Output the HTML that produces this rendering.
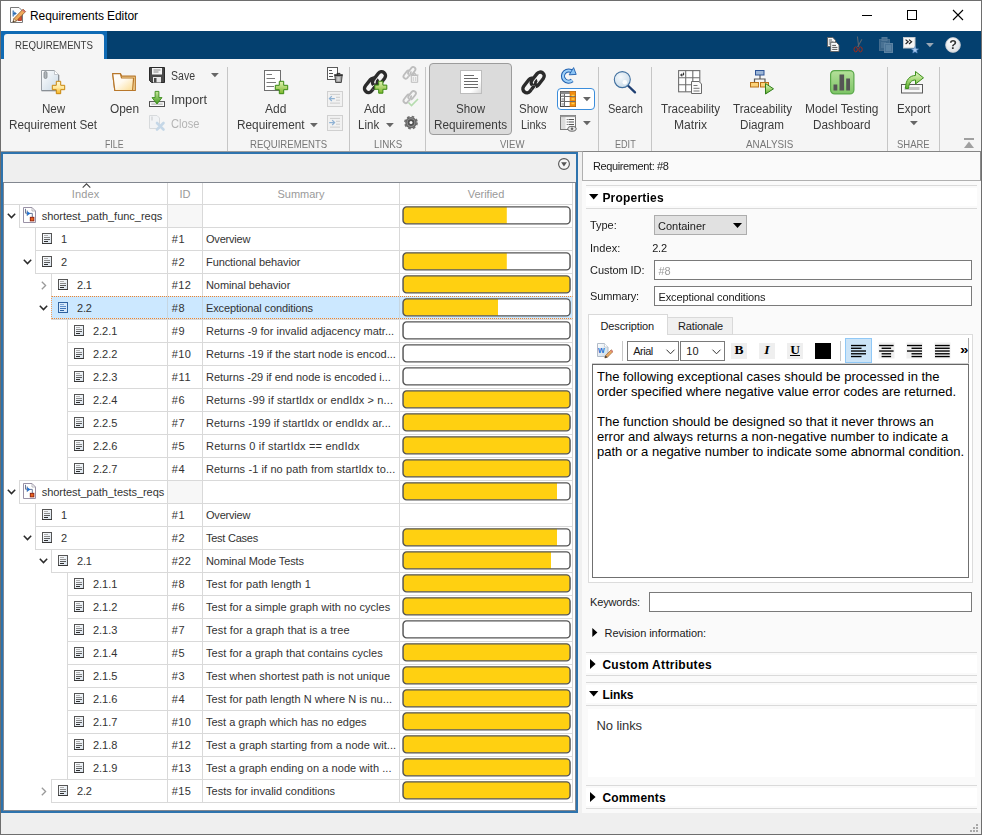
<!DOCTYPE html>
<html lang="en"><head><meta charset="utf-8"><title>Requirements Editor</title>
<style>
html,body{margin:0;padding:0;}
body{width:982px;height:835px;overflow:hidden;background:#f0f0f0;font-family:"Liberation Sans",sans-serif;}
#w{position:relative;width:982px;height:835px;overflow:hidden;background:#f0f0f0;}
#w div,#w span.t,#w svg{position:absolute;box-sizing:border-box;}
#w span.t{white-space:pre;line-height:16px;height:16px;}
#w svg{overflow:visible;}
</style></head>
<body><div id="w">
<svg width="0" height="0" style="left:0;top:0"><defs>
<linearGradient id="gDoc" x1="0" y1="0" x2="1" y2="1"><stop offset="0" stop-color="#ffffff"/><stop offset="1" stop-color="#c9d9e6"/></linearGradient>
<linearGradient id="gDocW" x1="0" y1="0" x2="1" y2="1"><stop offset="0" stop-color="#ffffff"/><stop offset="0.7" stop-color="#ffffff"/><stop offset="1" stop-color="#d8d8d8"/></linearGradient>
<linearGradient id="gGold" x1="0" y1="0" x2="0" y2="1"><stop offset="0" stop-color="#fff8d0"/><stop offset="0.5" stop-color="#ffe9a0"/><stop offset="1" stop-color="#f5b21c"/></linearGradient>
<linearGradient id="gGreen" x1="0" y1="0" x2="0" y2="1"><stop offset="0" stop-color="#e4f3b4"/><stop offset="1" stop-color="#7ab62a"/></linearGradient>
<linearGradient id="gFold" x1="0" y1="0" x2="1" y2="1"><stop offset="0" stop-color="#ffffff"/><stop offset="0.45" stop-color="#fffaf0"/><stop offset="1" stop-color="#fbdc90"/></linearGradient>
<linearGradient id="gArrG" x1="0" y1="0" x2="0" y2="1"><stop offset="0" stop-color="#c8e89a"/><stop offset="1" stop-color="#3f9a1d"/></linearGradient>
<linearGradient id="gArrL" x1="0" y1="0" x2="0" y2="1"><stop offset="0" stop-color="#e6f6c8"/><stop offset="0.5" stop-color="#a6d878"/><stop offset="1" stop-color="#58a82c"/></linearGradient>
<linearGradient id="gDash" x1="0" y1="0" x2="0" y2="1"><stop offset="0" stop-color="#b5e09a"/><stop offset="1" stop-color="#7cc465"/></linearGradient>
<linearGradient id="gBlue" x1="0" y1="0" x2="0" y2="1"><stop offset="0" stop-color="#bfe0fb"/><stop offset="1" stop-color="#2f7fd0"/></linearGradient>
<linearGradient id="gReq" x1="0" y1="0" x2="1" y2="1"><stop offset="0" stop-color="#ffffff"/><stop offset="1" stop-color="#d8e2ec"/></linearGradient>
<radialGradient id="gLens" cx="0.4" cy="0.35" r="0.7"><stop offset="0" stop-color="#f4f8fb"/><stop offset="1" stop-color="#c9dbe9"/></radialGradient>
<radialGradient id="gHelp" cx="0.4" cy="0.3" r="0.8"><stop offset="0" stop-color="#ffffff"/><stop offset="1" stop-color="#d9dde2"/></radialGradient>
</defs></svg>
<div style="left:0px;top:0px;width:982px;height:31px;background:#fff;"></div>
<svg style="left:10px;top:7px" width="17" height="17" viewBox="0 0 17 17"><path d="M0.5 0.5H9L12.5 4V15.5H0.5Z" fill="#fdfdfd" stroke="#7a7a7a"/><path d="M3.2 3.5V9.5M3.2 6.5H6" stroke="#2f6fb5" stroke-width="1.2" fill="none"/><path d="M4.2 4.6L6.8 6.5L4.2 8.4Z" fill="#2f6fb5"/><rect x="8" y="9" width="3.6" height="4.6" fill="#d9482b" stroke="#9c2a14" stroke-width="0.7"/><path d="M3 15L4 11.5L13 2.2L15.6 4.6L6.4 14Z" fill="#f0a95a" stroke="#8a5a2a" stroke-width="0.8" stroke-linejoin="round"/><path d="M13 2.2L15.6 4.6L14.6 5.6L12 3.2Z" fill="#d46a6a"/><path d="M3 15L4 11.5L6.4 14Z" fill="#f4e3c8" stroke="#6a4a2a" stroke-width="0.5"/><path d="M3 15L3.5 13.6L4.4 14.5Z" fill="#222"/></svg>
<span class="t" style="left:30.00px;top:7.50px;font-size:12px;color:#000;letter-spacing:-0.073px;">Requirements Editor</span>
<svg style="left:862px;top:10px" width="11" height="11" viewBox="0 0 11 11"><path d="M0 5.5H10" stroke="#000" stroke-width="1"/></svg>
<svg style="left:907px;top:10px" width="11" height="11" viewBox="0 0 11 11"><rect x="0.5" y="0.5" width="9" height="9" fill="none" stroke="#000" stroke-width="1"/></svg>
<svg style="left:953px;top:10px" width="11" height="11" viewBox="0 0 11 11"><path d="M0 0L10 10M10 0L0 10" stroke="#000" stroke-width="1.1"/></svg>
<div style="left:0;top:0;width:982px;height:152px;will-change:transform;">
<div style="left:1px;top:31px;width:980px;height:28px;background:#04406f;"></div>
<div style="left:1px;top:31px;width:106px;height:28px;background:#0f6ab4;"></div>
<div style="left:4px;top:34px;width:100px;height:25px;background:#f5f5f5;border-radius:3px 3px 0 0;"></div>
<span class="t" style="left:15.30px;top:37.00px;font-size:10.8px;color:#3a3a3a;transform:scaleX(0.8965);transform-origin:0 50%;">REQUIREMENTS</span>
<svg style="left:827px;top:37px" width="13" height="15" viewBox="0 0 13 15"><path d="M0.5 0.5H5.8L8.5 3.2V9.5H0.5Z" fill="#f6f6f6" stroke="#5e5e5e" stroke-width="0.9"/><path d="M1.8 3H5M1.8 5H6.5M1.8 7H3.5" stroke="#555" stroke-width="0.9"/><path d="M3.7 5.3H9.3L12 8V14.5H3.7Z" fill="#fcfcfc" stroke="#5e5e5e" stroke-width="0.9"/><path d="M5.2 8.4H9M5.2 10.4H10.4M5.2 12.4H10.4" stroke="#444" stroke-width="0.9"/></svg>
<svg style="left:853px;top:36px" width="11" height="17" viewBox="0 0 11 17"><path d="M4.4 0.5L5.7 10.8M8.9 3.2L4.6 11" fill="none" stroke="#5a636e" stroke-width="1.1"/><ellipse cx="2.7" cy="13.4" rx="1.7" ry="2.5" fill="none" stroke="#a32a18" stroke-width="1.0"/><ellipse cx="7.5" cy="13.4" rx="1.7" ry="2.5" fill="none" stroke="#a32a18" stroke-width="1.0"/></svg>
<svg style="left:879px;top:37px" width="14" height="16" viewBox="0 0 14 16"><g opacity="0.5"><rect x="0.5" y="2.5" width="10" height="11" fill="#6f88a2" stroke="#8499ae"/><rect x="3" y="0.5" width="5" height="3" fill="#8aa0b6" stroke="#9fb2c4"/><path d="M2 6H7M2 8H5M2 10H5" stroke="#b9c8d6" stroke-width="0.9"/><rect x="5.5" y="6.5" width="8" height="9" fill="#8da6c0" stroke="#b4c6d8"/><path d="M7 9H12M7 11H12M7 13H12" stroke="#dbe6f0" stroke-width="0.9"/></g></svg>
<svg style="left:903px;top:37px" width="17" height="17" viewBox="0 0 17 17"><rect x="0.5" y="0.5" width="11.5" height="10.5" fill="#f6f6f6" stroke="#c4c9ce"/><path d="M2.6 2.6L5.2 4.8L2.6 7M6 2.6L8.6 4.8L6 7" fill="none" stroke="#222" stroke-width="1.2"/><path d="M11.8 8.8L12.9 11.4L15.8 11.6L13.6 13.4L14.3 16.2L11.8 14.7L9.3 16.2L10 13.4L7.8 11.6L10.7 11.4Z" fill="#a8caf2" stroke="#5a8cc8" stroke-width="0.7" transform="translate(1.6,1.8) scale(0.88)"/></svg>
<svg style="left:925.5px;top:43.3px" width="7.8" height="4.3" viewBox="0 0 7.8 4.3"><path d="M0 0H7.8L3.9 4.3Z" fill="#9aa7b4"/></svg>
<svg style="left:945px;top:36.5px" width="16" height="16" viewBox="0 0 16 16"><circle cx="8" cy="8" r="7.4" fill="url(#gHelp)" stroke="#c5cad0" stroke-width="0.8"/><text x="8" y="12.4" text-anchor="middle" font-family="Liberation Sans, sans-serif" font-weight="bold" font-size="12.5" fill="#333">?</text></svg>
<div style="left:1px;top:59px;width:980px;height:92px;background:#f5f5f5;"></div>
<div style="left:1px;top:151px;width:980px;height:1px;background:#9a9a9a;"></div>
<div style="left:227px;top:67px;width:1px;height:84px;background:#c6c6c6;"></div>
<div style="left:349px;top:67px;width:1px;height:84px;background:#c6c6c6;"></div>
<div style="left:425px;top:67px;width:1px;height:84px;background:#c6c6c6;"></div>
<div style="left:598px;top:67px;width:1px;height:84px;background:#c6c6c6;"></div>
<div style="left:651px;top:67px;width:1px;height:84px;background:#c6c6c6;"></div>
<div style="left:887px;top:67px;width:1px;height:84px;background:#c6c6c6;"></div>
<div style="left:939px;top:67px;width:1px;height:84px;background:#c6c6c6;"></div>
<svg style="left:41px;top:70px" width="25" height="25" viewBox="0 0 25 25"><path d="M0.5 0.5H13.5L17.5 4.5V20.5H0.5Z" fill="url(#gDoc)" stroke="#9aa0a6"/><path d="M13.5 0.5V4.5H17.5" fill="#fff" stroke="#b5bac0" stroke-width="0.8"/><rect x="3" y="1.5" width="3" height="7" rx="1.5" fill="#b0b5ba" stroke="#7f858a" stroke-width="0.8"/><path d="M0.5 20.9H17.9V5" fill="none" stroke="#70757a" stroke-width="0.9" opacity="0.7"/><path d="M15.3 11.3H19.7V15.3H23.7V19.7H19.7V23.7H15.3V19.7H11.3V15.3H15.3Z" fill="url(#gGold)" stroke="#c8860d" stroke-width="1" stroke-linejoin="round"/></svg>
<span class="t" style="left:41.60px;top:101.00px;font-size:12px;color:#3c3c3c;transform:scaleX(0.9664);transform-origin:0 50%;">New</span>
<span class="t" style="left:9.00px;top:117.00px;font-size:12px;color:#3c3c3c;transform:scaleX(0.9773);transform-origin:0 50%;">Requirement Set</span>
<svg style="left:112px;top:72.5px" width="25" height="19" viewBox="0 0 25 19"><path d="M0.7 0.7H8.5L9.8 3.2H23.3V17.5H2.8Z" fill="#fbe3a8" stroke="#b8772a" stroke-width="1.2" stroke-linejoin="round"/><path d="M0.7 0.7H8.3L9.6 5.0H21.6L20.6 17.5H2.8Z" fill="url(#gFold)" stroke="#b8772a" stroke-width="1.2" stroke-linejoin="round"/></svg>
<span class="t" style="left:109.50px;top:101.00px;font-size:12px;color:#3c3c3c;transform:scaleX(0.9879);transform-origin:0 50%;">Open</span>
<svg style="left:149px;top:67px" width="16" height="16" viewBox="0 0 16 16"><path d="M0.5 0.5H15.5V15.5H2.5L0.5 13.5Z" fill="#4a4a4a" stroke="#2a2a2a"/><rect x="3" y="1" width="10" height="6.5" fill="#f4f4f4"/><path d="M4.5 3H11.5M4.5 5H9.5" stroke="#8a8a8a" stroke-width="1"/><rect x="4" y="10" width="8" height="5.5" fill="#e8e8e8"/><rect x="5" y="11" width="2.5" height="4.5" fill="#4a4a4a"/></svg>
<span class="t" style="left:171.00px;top:68.00px;font-size:12px;color:#3c3c3c;transform:scaleX(0.8775);transform-origin:0 50%;">Save</span>
<svg style="left:211.0px;top:73.3px" width="7.8" height="4.3" viewBox="0 0 7.8 4.3"><path d="M0 0H7.8L3.9 4.3Z" fill="#666"/></svg>
<svg style="left:149px;top:91px" width="16" height="16" viewBox="0 0 16 16"><rect x="0.5" y="10.6" width="15" height="4.9" fill="#fbfbfb" stroke="#4f4f4f"/><rect x="2.3" y="12.4" width="11.4" height="1.5" fill="#c2c2c2"/><path d="M6.1 0.4H9.9V6.6H13L8 13L3 6.6H6.1Z" fill="url(#gArrG)" stroke="#3a8a1a" stroke-width="0.9" stroke-linejoin="round"/></svg>
<span class="t" style="left:171.00px;top:92.00px;font-size:12px;color:#3c3c3c;transform:scaleX(1.0586);transform-origin:0 50%;">Import</span>
<svg style="left:149px;top:115px" width="16" height="16" viewBox="0 0 16 16"><g opacity="0.55"><path d="M0.5 0.5H8L10.5 3V13.5H0.5Z" fill="#eef2f6" stroke="#c0c4c8"/><rect x="2" y="1.5" width="2" height="4" fill="#c8ccd0"/><path d="M8 8L14.5 14.5M14.5 8L8 14.5" stroke="#9fc0dc" stroke-width="2.6" stroke-linecap="round"/></g></svg>
<span class="t" style="left:171.00px;top:116.00px;font-size:12px;color:#b4b4b4;transform:scaleX(0.9289);transform-origin:0 50%;">Close</span>
<span class="t" style="left:105.00px;top:136.00px;font-size:10.5px;color:#777;transform:scaleX(0.8343);transform-origin:0 50%;">FILE</span>
<svg style="left:264px;top:70px" width="25" height="25" viewBox="0 0 25 25"><rect x="0.5" y="0.5" width="16" height="20" fill="url(#gDocW)" stroke="#6e6e6e"/><path d="M2.5 4.5H8M2.5 8.5H11M2.5 12.5H12M2.5 16.5H10" stroke="#7a7a7a" stroke-width="1"/><path d="M15.3 11.3H19.7V15.3H23.7V19.7H19.7V23.7H15.3V19.7H11.3V15.3H15.3Z" fill="url(#gGreen)" stroke="#3a8a12" stroke-width="1" stroke-linejoin="round"/></svg>
<span class="t" style="left:265.00px;top:101.00px;font-size:12px;color:#3c3c3c;transform:scaleX(1.0023);transform-origin:0 50%;">Add</span>
<span class="t" style="left:236.60px;top:117.00px;font-size:12px;color:#3c3c3c;transform:scaleX(0.9840);transform-origin:0 50%;">Requirement</span>
<svg style="left:310.0px;top:123.3px" width="7.8" height="4.3" viewBox="0 0 7.8 4.3"><path d="M0 0H7.8L3.9 4.3Z" fill="#666"/></svg>
<svg style="left:327px;top:67px" width="16" height="16" viewBox="0 0 16 16"><rect x="0.5" y="0.5" width="10" height="12" fill="#fff" stroke="#5a5a5a"/><path d="M2 3.5H5M2 6.5H6M2 9.5H6" stroke="#555" stroke-width="1"/><path d="M7.8 8.5H15.2L14.3 15.5H8.7Z" fill="#9a9a9a" stroke="#3c3c3c" stroke-width="0.9"/><path d="M7.2 8H15.8" stroke="#2c2c2c" stroke-width="1.6"/><path d="M10 7V6.4H13V7" fill="none" stroke="#2c2c2c" stroke-width="1"/><path d="M10.3 10V14.2M11.5 10V14.2M12.7 10V14.2" stroke="#e0e0e0" stroke-width="0.7"/></svg>
<svg style="left:327px;top:91px" width="16" height="16" viewBox="0 0 16 16"><rect x="0.5" y="0.5" width="15" height="15" fill="#f1f1f1" stroke="#d0d0d0"/><path d="M3 3.4H13M9 6.3H13M9 9.2H13M3 12.1H13" stroke="#cdcdcd" stroke-width="1"/><path d="M7.8 7.6H2.6M4.8 5.2L2.4 7.6L4.8 10" fill="none" stroke="#8fb2d4" stroke-width="1.2"/></svg>
<svg style="left:327px;top:115px" width="16" height="16" viewBox="0 0 16 16"><rect x="0.5" y="0.5" width="15" height="15" fill="#f1f1f1" stroke="#d0d0d0"/><path d="M3 3.4H13M9 6.3H13M9 9.2H13M3 12.1H13" stroke="#cdcdcd" stroke-width="1"/><path d="M2.2 7.6H7.4M5.2 5.2L7.6 7.6L5.2 10" fill="none" stroke="#8fb2d4" stroke-width="1.2"/></svg>
<span class="t" style="left:249.80px;top:136.00px;font-size:10.5px;color:#777;transform:scaleX(0.9126);transform-origin:0 50%;">REQUIREMENTS</span>
<svg style="left:363px;top:70px" width="25" height="25" viewBox="0 0 25 25"><g fill="none" stroke="#2b2b2b" stroke-width="3.4" opacity="1"><rect x="-8.1" y="-4.0" width="16.2" height="8.0" rx="4.0" transform="translate(8.0,15.3) rotate(-52)" /><g clip-path="circle(4.2px at 10.5px 11.950000000000001px)"><rect x="-8.1" y="-4.0" width="16.2" height="8.0" rx="4.0" transform="translate(16.0,9.0) rotate(-52)" stroke="#f5f5f5" stroke-width="5.2"/></g><rect x="-8.1" y="-4.0" width="16.2" height="8.0" rx="4.0" transform="translate(16.0,9.0) rotate(-52)" /><g clip-path="circle(2.6px at 15.2px 14.55px)"><rect x="-8.1" y="-4.0" width="16.2" height="8.0" rx="4.0" transform="translate(8.0,15.3) rotate(-52)" stroke="#f5f5f5" stroke-width="5.2"/><rect x="-8.1" y="-4.0" width="16.2" height="8.0" rx="4.0" transform="translate(8.0,15.3) rotate(-52)" /></g></g><path d="M15.700000000000001 11.2H19.900000000000002V15.1H23.8V19.3H19.900000000000002V23.2H15.700000000000001V19.3H11.8V15.1H15.700000000000001Z" fill="url(#gGreen)" stroke="#3a8a12" stroke-width="1" stroke-linejoin="round"/></svg>
<span class="t" style="left:363.90px;top:101.00px;font-size:12px;color:#3c3c3c;transform:scaleX(1.0023);transform-origin:0 50%;">Add</span>
<span class="t" style="left:358.20px;top:117.00px;font-size:12px;color:#3c3c3c;transform:scaleX(0.9630);transform-origin:0 50%;">Link</span>
<svg style="left:385.5px;top:123.3px" width="7.8" height="4.3" viewBox="0 0 7.8 4.3"><path d="M0 0H7.8L3.9 4.3Z" fill="#666"/></svg>
<svg style="left:403px;top:67px" width="16" height="16" viewBox="0 0 16 16"><g transform="scale(0.56) translate(-1,-2)"><g fill="none" stroke="#bdbdbd" stroke-width="3.2" opacity="1"><rect x="-8.1" y="-4.0" width="16.2" height="8.0" rx="4.0" transform="translate(8.4,15.5) rotate(-52)" /><g clip-path="circle(4.2px at 11.05px 12.200000000000001px)"><rect x="-8.1" y="-4.0" width="16.2" height="8.0" rx="4.0" transform="translate(16.7,9.3) rotate(-52)" stroke="#f5f5f5" stroke-width="5.0"/></g><rect x="-8.1" y="-4.0" width="16.2" height="8.0" rx="4.0" transform="translate(16.7,9.3) rotate(-52)" /><g clip-path="circle(2.6px at 15.75px 14.8px)"><rect x="-8.1" y="-4.0" width="16.2" height="8.0" rx="4.0" transform="translate(8.4,15.5) rotate(-52)" stroke="#f5f5f5" stroke-width="5.0"/><rect x="-8.1" y="-4.0" width="16.2" height="8.0" rx="4.0" transform="translate(8.4,15.5) rotate(-52)" /></g></g></g><path d="M8.3 8.5H14.7V15.3H8.3Z" fill="#f2f2f2" stroke="#bdbdbd" stroke-width="1"/><path d="M7.5 8H15.5M10 7.6L11.5 6L13 7.6" fill="none" stroke="#bdbdbd" stroke-width="1.2"/><path d="M10.3 10V14M12.7 10V14" stroke="#c8c8c8" stroke-width="0.9"/></svg>
<svg style="left:403px;top:91px" width="16" height="16" viewBox="0 0 16 16"><g transform="scale(0.58) translate(-1,-2)"><g fill="none" stroke="#bdbdbd" stroke-width="3.2" opacity="1"><rect x="-8.1" y="-4.0" width="16.2" height="8.0" rx="4.0" transform="translate(8.4,15.5) rotate(-52)" /><g clip-path="circle(4.2px at 11.05px 12.200000000000001px)"><rect x="-8.1" y="-4.0" width="16.2" height="8.0" rx="4.0" transform="translate(16.7,9.3) rotate(-52)" stroke="#f5f5f5" stroke-width="5.0"/></g><rect x="-8.1" y="-4.0" width="16.2" height="8.0" rx="4.0" transform="translate(16.7,9.3) rotate(-52)" /><g clip-path="circle(2.6px at 15.75px 14.8px)"><rect x="-8.1" y="-4.0" width="16.2" height="8.0" rx="4.0" transform="translate(8.4,15.5) rotate(-52)" stroke="#f5f5f5" stroke-width="5.0"/><rect x="-8.1" y="-4.0" width="16.2" height="8.0" rx="4.0" transform="translate(8.4,15.5) rotate(-52)" /></g></g></g><path d="M5.5 11.5L8.5 14.5L15 8" fill="none" stroke="#b5dcae" stroke-width="1.6"/></svg>
<svg style="left:403px;top:115px" width="16" height="16" viewBox="0 0 16 16"><g transform="translate(0,-0.4)"><circle cx="8" cy="8" r="6.1" fill="none" stroke="#707070" stroke-width="1.6" stroke-dasharray="2.6 2.19"/><circle cx="8" cy="8" r="5.7" fill="#666"/><circle cx="8" cy="8" r="4.3" fill="#909090"/><circle cx="8" cy="8" r="3.3" fill="#505050"/><circle cx="8" cy="8" r="1.5" fill="#fafafa"/></g></svg>
<span class="t" style="left:373.50px;top:136.00px;font-size:10.5px;color:#777;transform:scaleX(0.9293);transform-origin:0 50%;">LINKS</span>
<div style="left:429px;top:63px;width:83px;height:72px;background:#dbdbdb;border:1px solid #9c9c9c;border-radius:4px;"></div>
<svg style="left:460px;top:70px" width="23" height="25" viewBox="0 0 23 25"><rect x="0.5" y="0.5" width="21" height="23" fill="url(#gDocW)" stroke="#bdbdbd"/><path d="M4 5.5H14M4 8.5H18M4 11.5H18M4 14.5H18M4 17.5H18" stroke="#6a6a6a" stroke-width="1"/></svg>
<span class="t" style="left:456.20px;top:101.00px;font-size:12px;color:#3c3c3c;transform:scaleX(0.9661);transform-origin:0 50%;">Show</span>
<span class="t" style="left:434.00px;top:117.00px;font-size:12px;color:#3c3c3c;transform:scaleX(0.9772);transform-origin:0 50%;">Requirements</span>
<svg style="left:521px;top:70px" width="26" height="25" viewBox="0 0 26 25"><g fill="none" stroke="#2b2b2b" stroke-width="3.4" opacity="1"><rect x="-8.1" y="-4.0" width="16.2" height="8.0" rx="4.0" transform="translate(8.4,15.5) rotate(-52)" /><g clip-path="circle(4.2px at 11.05px 12.200000000000001px)"><rect x="-8.1" y="-4.0" width="16.2" height="8.0" rx="4.0" transform="translate(16.7,9.3) rotate(-52)" stroke="#f5f5f5" stroke-width="5.2"/></g><rect x="-8.1" y="-4.0" width="16.2" height="8.0" rx="4.0" transform="translate(16.7,9.3) rotate(-52)" /><g clip-path="circle(2.6px at 15.75px 14.8px)"><rect x="-8.1" y="-4.0" width="16.2" height="8.0" rx="4.0" transform="translate(8.4,15.5) rotate(-52)" stroke="#f5f5f5" stroke-width="5.2"/><rect x="-8.1" y="-4.0" width="16.2" height="8.0" rx="4.0" transform="translate(8.4,15.5) rotate(-52)" /></g></g></svg>
<span class="t" style="left:519.30px;top:101.00px;font-size:12px;color:#3c3c3c;transform:scaleX(0.9594);transform-origin:0 50%;">Show</span>
<span class="t" style="left:521.00px;top:117.00px;font-size:12px;color:#3c3c3c;transform:scaleX(0.9067);transform-origin:0 50%;">Links</span>
<svg style="left:560px;top:66.5px" width="17" height="17" viewBox="0 0 17 17"><path d="M12.6 5.2 A5.6 5.6 0 1 0 12.2 13.4" fill="none" stroke="#1f5fae" stroke-width="4.2"/><path d="M12.6 5.2 A5.6 5.6 0 1 0 12.2 13.4" fill="none" stroke="#9fd0f8" stroke-width="2.2"/><path d="M9.2 7.8L16.2 7.4L13.6 0.6Z" fill="#8cc4f4" stroke="#1f5fae" stroke-width="0.9" stroke-linejoin="round"/></svg>
<div style="left:557px;top:88px;width:38px;height:22px;background:#fff;border:1px solid #3b8ddb;border-radius:4px;"></div>
<svg style="left:560px;top:91px" width="16" height="16" viewBox="0 0 16 16"><rect x="0.5" y="0.5" width="15" height="15" fill="#fff" stroke="#4a4a4a"/><rect x="0.5" y="0.5" width="15" height="2.5" fill="#8a8a8a"/><rect x="10" y="0.5" width="5.5" height="15" fill="#f28c10" stroke="#d97706" stroke-width="0.6"/><path d="M0.5 5.5H15.5M0.5 10.5H15.5M4.5 3V15.5" stroke="#6a6a6a" stroke-width="1"/><rect x="1.5" y="3.5" width="2.5" height="1.8" fill="#bdbdbd"/><rect x="1.5" y="7" width="2.5" height="2.8" fill="#bdbdbd"/><rect x="1.5" y="12" width="2.5" height="2.8" fill="#bdbdbd"/><path d="M11.5 4.5H14.5M11.5 8H14.5M11.5 12.5H14.5" stroke="#ffd24a" stroke-width="1.4"/></svg>
<svg style="left:582.5px;top:97.3px" width="7.8" height="4.3" viewBox="0 0 7.8 4.3"><path d="M0 0H7.8L3.9 4.3Z" fill="#666"/></svg>
<svg style="left:560px;top:115px" width="17" height="17" viewBox="0 0 17 17"><rect x="0.5" y="0.5" width="15" height="14" fill="#fafafa" stroke="#7a7a7a"/><rect x="1" y="1" width="4.5" height="13" fill="#dcdcdc"/><rect x="0.5" y="0.5" width="15" height="1.6" fill="#9a9a9a"/><path d="M8.5 4.5H14M8.5 7H14M8.5 9.5H14" stroke="#555" stroke-width="1"/><path d="M6.8 4.5H7.6M6.8 7H7.6M6.8 9.5H7.6" stroke="#333" stroke-width="1"/><ellipse cx="12" cy="13.8" rx="4.2" ry="2.4" fill="#e8e8e8" stroke="#555" stroke-width="0.9"/><circle cx="12" cy="13.8" r="1.3" fill="#666"/></svg>
<svg style="left:582.5px;top:121.3px" width="7.8" height="4.3" viewBox="0 0 7.8 4.3"><path d="M0 0H7.8L3.9 4.3Z" fill="#666"/></svg>
<span class="t" style="left:500.20px;top:136.00px;font-size:10.5px;color:#777;transform:scaleX(0.9093);transform-origin:0 50%;">VIEW</span>
<svg style="left:613px;top:71px" width="24" height="23" viewBox="0 0 24 23"><path d="M14.6 14.2L22 21.4" stroke="#1f3f72" stroke-width="2.3" stroke-linecap="round"/><circle cx="9.3" cy="8.6" r="8" fill="url(#gLens)" stroke="#41709f" stroke-width="1.1"/><circle cx="11.8" cy="11.2" r="2.3" fill="#ffffff" opacity="0.9"/></svg>
<span class="t" style="left:607.50px;top:101.00px;font-size:12px;color:#3c3c3c;transform:scaleX(0.9205);transform-origin:0 50%;">Search</span>
<span class="t" style="left:614.90px;top:136.00px;font-size:10.5px;color:#777;transform:scaleX(0.8655);transform-origin:0 50%;">EDIT</span>
<svg style="left:678px;top:70px" width="25" height="25" viewBox="0 0 25 25"><rect x="0.6" y="0.6" width="21.2" height="21.2" fill="#fff" stroke="#6f6f6f" stroke-width="1.1"/><path d="M7.7 0.6V21.8M14.8 0.6V21.8M0.6 7.7H21.8M0.6 14.8H21.8" stroke="#6f6f6f" stroke-width="1.1"/><path d="M5.6 2.6V5H2.8M4.2 3.6L2.6 5L4.2 6.4" fill="none" stroke="#222" stroke-width="1"/><path d="M13.5 11.5H21L23.5 14V23.5H13.5Z" fill="#fbfbfb" stroke="#6a6a6a"/><path d="M15.5 15.5H19.5M15.5 18.3H21.5M15.5 21H21.5" stroke="#777" stroke-width="1"/></svg>
<span class="t" style="left:660.50px;top:101.00px;font-size:12px;color:#3c3c3c;transform:scaleX(0.9687);transform-origin:0 50%;">Traceability</span>
<span class="t" style="left:673.50px;top:117.00px;font-size:12px;color:#3c3c3c;transform:scaleX(1.0102);transform-origin:0 50%;">Matrix</span>
<svg style="left:749.5px;top:70px" width="25" height="25" viewBox="0 0 25 25"><path d="M10 5V9M4.5 12.5V9H15V12.5" fill="none" stroke="#5a5a5a" stroke-width="1.2"/><rect x="5.5" y="0.5" width="8.5" height="4.5" fill="#9db6d6" stroke="#2f5597"/><rect x="0.5" y="12.5" width="8" height="4.5" fill="#fbd27a" stroke="#b8721a"/><rect x="10.5" y="12.5" width="8" height="4.5" fill="#fbd27a" stroke="#b8721a"/><path d="M15.5 13.5L23.5 18.8L15.5 24Z" fill="url(#gArrL)" stroke="#2f7d1a" stroke-linejoin="round"/></svg>
<span class="t" style="left:732.50px;top:101.00px;font-size:12px;color:#3c3c3c;transform:scaleX(0.9687);transform-origin:0 50%;">Traceability</span>
<span class="t" style="left:740.00px;top:117.00px;font-size:12px;color:#3c3c3c;transform:scaleX(0.9703);transform-origin:0 50%;">Diagram</span>
<svg style="left:830px;top:70px" width="25" height="25" viewBox="0 0 25 25"><rect x="0.6" y="0.6" width="23.3" height="23.3" rx="4" fill="url(#gDash)" stroke="#5aa84a" stroke-width="1.2"/><rect x="3.5" y="14.5" width="3.8" height="6" fill="#555555"/><rect x="9.5" y="4.5" width="4.6" height="16" fill="#555555"/><rect x="16.2" y="8.5" width="3.8" height="12" fill="#555555"/></svg>
<span class="t" style="left:804.75px;top:101.00px;font-size:12px;color:#3c3c3c;transform:scaleX(0.9956);transform-origin:0 50%;">Model Testing</span>
<span class="t" style="left:812.75px;top:117.00px;font-size:12px;color:#3c3c3c;transform:scaleX(0.9795);transform-origin:0 50%;">Dashboard</span>
<span class="t" style="left:745.90px;top:136.00px;font-size:10.5px;color:#777;transform:scaleX(0.9372);transform-origin:0 50%;">ANALYSIS</span>
<svg style="left:901px;top:70px" width="25" height="25" viewBox="0 0 25 25"><rect x="0.5" y="14.5" width="21" height="8.5" fill="#f8f8f8" stroke="#5a5a5a"/><rect x="3.5" y="17" width="15" height="3" fill="#c4c4c4"/><path d="M4.5 18.5C4.5 9.5 9 5.5 14.5 5.5V1.5L22.5 7.8L14.5 14V10C10.5 10 8 12.5 7.5 18.5Z" fill="url(#gArrL)" stroke="#3c8f1c" stroke-linejoin="round"/></svg>
<span class="t" style="left:896.60px;top:101.00px;font-size:12px;color:#3c3c3c;transform:scaleX(0.9630);transform-origin:0 50%;">Export</span>
<svg style="left:910.0px;top:121.3px" width="7.8" height="4.3" viewBox="0 0 7.8 4.3"><path d="M0 0H7.8L3.9 4.3Z" fill="#666"/></svg>
<span class="t" style="left:897.20px;top:136.00px;font-size:10.5px;color:#777;transform:scaleX(0.9039);transform-origin:0 50%;">SHARE</span>
<svg style="left:964px;top:138px" width="10" height="10" viewBox="0 0 10 10"><rect x="0" y="0" width="10" height="2" fill="#a0a0a0"/><path d="M5 3.5L10 10H0Z" fill="#a0a0a0"/></svg>
</div>
<div style="left:1px;top:152px;width:980px;height:661px;background:#f0f0f0;"></div>
<div style="left:1px;top:152px;width:577px;height:661px;background:#fff;border:2px solid #2e73ad;"></div>
<div style="left:3px;top:154px;width:573px;height:28px;background:#efefef;"></div>
<div style="left:3px;top:182px;width:573px;height:629px;background:#fff;border:1px solid #828790;"></div>
<svg style="left:558px;top:158px" width="12" height="12" viewBox="0 0 12 12"><circle cx="6" cy="6" r="5.4" fill="#f6f6f6" stroke="#555" stroke-width="1.1"/><path d="M3.1 4.2H8.9L6 8.6Z" fill="#555"/></svg>
<span class="t" style="left:71.75px;top:186.00px;font-size:11px;color:#9a9a9a;letter-spacing:0.118px;">Index</span>
<span class="t" style="left:179.50px;top:186.00px;font-size:11px;color:#9a9a9a;">ID</span>
<span class="t" style="left:277.50px;top:186.00px;font-size:11px;color:#9a9a9a;letter-spacing:-0.009px;">Summary</span>
<span class="t" style="left:467.75px;top:186.00px;font-size:11px;color:#9a9a9a;letter-spacing:-0.024px;">Verified</span>
<svg style="left:82px;top:182.6px" width="9" height="5" viewBox="0 0 9 5"><path d="M0.7 4.6L4.5 0.8L8.3 4.6" fill="none" stroke="#444" stroke-width="1.1"/></svg>
<div style="left:167px;top:183px;width:1px;height:21px;background:#d9d9d9;"></div>
<div style="left:202px;top:183px;width:1px;height:21px;background:#d9d9d9;"></div>
<div style="left:399px;top:183px;width:1px;height:21px;background:#d9d9d9;"></div>
<div style="left:572px;top:183px;width:1px;height:21px;background:#d9d9d9;"></div>
<div style="left:4px;top:204px;width:569px;height:1px;background:#d9d9d9;"></div>
<div style="left:19px;top:204px;width:1px;height:24px;background:#d9d9d9;"></div>
<div style="left:167px;top:205px;width:1px;height:22px;background:#d9d9d9;"></div>
<div style="left:202px;top:205px;width:1px;height:22px;background:#d9d9d9;"></div>
<div style="left:399px;top:205px;width:1px;height:22px;background:#d9d9d9;"></div>
<div style="left:572px;top:205px;width:1px;height:22px;background:#d9d9d9;"></div>
<div style="left:168px;top:205px;width:34px;height:22px;background:#f7f7f7;"></div>
<svg style="left:7.0px;top:212.5px" width="9" height="6" viewBox="0 0 9 6"><path d="M0.8 0.8L4.5 4.6L8.2 0.8" fill="none" stroke="#2a2a2a" stroke-width="1.5"/></svg>
<svg style="left:23px;top:207px" width="13" height="16" viewBox="0 0 13 16"><path d="M0.5 0.5H9L12.5 4V15.5H0.5Z" fill="#fff" stroke="#8f869c" stroke-width="0.9"/><path d="M9 0.5V4H12.5" fill="none" stroke="#a9a9b0" stroke-width="0.8"/><path d="M2.5 1.8V6.2H4.2M4.2 3.5V8.8M6.8 6.4H9.3V10" fill="none" stroke="#5a6a8a" stroke-width="0.9"/><path d="M4.2 4.2L7.6 6.4L4.2 8.6Z" fill="#1f6fd0"/><rect x="7.3" y="10.3" width="3.6" height="3.6" fill="#e8641c" stroke="#8c1a0a" stroke-width="0.9"/></svg>
<span class="t" style="left:41.70px;top:208.00px;font-size:11px;color:#333;letter-spacing:-0.025px;">shortest_path_func_reqs</span>
<svg style="left:402px;top:206px" width="170" height="19" viewBox="0 0 170 19"><rect x="1.05" y="0.85" width="167" height="17" rx="3.6" fill="#fff"/><clipPath id="bc0"><rect x="0" y="0" width="104.8" height="19"/></clipPath><rect x="1.05" y="0.85" width="167" height="17" rx="3.6" fill="#ffd011" clip-path="url(#bc0)"/><rect x="1.05" y="0.85" width="167" height="17" rx="3.6" fill="none" stroke="#555" stroke-width="1.45"/></svg>
<div style="left:19px;top:227px;width:554px;height:1px;background:#d9d9d9;"></div>
<div style="left:35px;top:227px;width:1px;height:24px;background:#d9d9d9;"></div>
<div style="left:167px;top:228px;width:1px;height:22px;background:#d9d9d9;"></div>
<div style="left:202px;top:228px;width:1px;height:22px;background:#d9d9d9;"></div>
<div style="left:399px;top:228px;width:1px;height:22px;background:#d9d9d9;"></div>
<div style="left:572px;top:228px;width:1px;height:22px;background:#d9d9d9;"></div>
<svg style="left:42px;top:233px" width="10" height="11" viewBox="0 0 10 11"><rect x="0.5" y="0.5" width="9" height="10" fill="url(#gReq)" stroke="#555"/><path d="M0 10.5H10" stroke="#333" stroke-width="1" opacity="0.8"/><rect x="2" y="2" width="4" height="1" fill="#b0b0b0"/><rect x="2" y="4" width="6" height="1" fill="#8a8a8a"/><rect x="2" y="6" width="6" height="1" fill="#5a5a5a"/><rect x="2" y="8" width="4" height="1" fill="#2e2e2e"/></svg>
<span class="t" style="left:61.00px;top:231.00px;font-size:11px;color:#333;">1</span>
<span class="t" style="left:171.80px;top:231.00px;font-size:11px;color:#333;letter-spacing:0.582px;">#1</span>
<span class="t" style="left:206.00px;top:231.00px;font-size:11px;color:#333;letter-spacing:-0.193px;">Overview</span>
<div style="left:35px;top:250px;width:538px;height:1px;background:#d9d9d9;"></div>
<div style="left:35px;top:250px;width:1px;height:24px;background:#d9d9d9;"></div>
<div style="left:167px;top:251px;width:1px;height:22px;background:#d9d9d9;"></div>
<div style="left:202px;top:251px;width:1px;height:22px;background:#d9d9d9;"></div>
<div style="left:399px;top:251px;width:1px;height:22px;background:#d9d9d9;"></div>
<div style="left:572px;top:251px;width:1px;height:22px;background:#d9d9d9;"></div>
<svg style="left:23.0px;top:258.5px" width="9" height="6" viewBox="0 0 9 6"><path d="M0.8 0.8L4.5 4.6L8.2 0.8" fill="none" stroke="#2a2a2a" stroke-width="1.5"/></svg>
<svg style="left:42px;top:256px" width="10" height="11" viewBox="0 0 10 11"><rect x="0.5" y="0.5" width="9" height="10" fill="url(#gReq)" stroke="#555"/><path d="M0 10.5H10" stroke="#333" stroke-width="1" opacity="0.8"/><rect x="2" y="2" width="4" height="1" fill="#b0b0b0"/><rect x="2" y="4" width="6" height="1" fill="#8a8a8a"/><rect x="2" y="6" width="6" height="1" fill="#5a5a5a"/><rect x="2" y="8" width="4" height="1" fill="#2e2e2e"/></svg>
<span class="t" style="left:61.00px;top:254.00px;font-size:11px;color:#333;">2</span>
<span class="t" style="left:171.80px;top:254.00px;font-size:11px;color:#333;letter-spacing:0.582px;">#2</span>
<span class="t" style="left:206.00px;top:254.00px;font-size:11px;color:#333;letter-spacing:-0.084px;">Functional behavior</span>
<svg style="left:402px;top:252px" width="170" height="19" viewBox="0 0 170 19"><rect x="1.05" y="0.85" width="167" height="17" rx="3.6" fill="#fff"/><clipPath id="bc2"><rect x="0" y="0" width="104.8" height="19"/></clipPath><rect x="1.05" y="0.85" width="167" height="17" rx="3.6" fill="#ffd011" clip-path="url(#bc2)"/><rect x="1.05" y="0.85" width="167" height="17" rx="3.6" fill="none" stroke="#555" stroke-width="1.45"/></svg>
<div style="left:35px;top:273px;width:538px;height:1px;background:#d9d9d9;"></div>
<div style="left:51px;top:273px;width:1px;height:24px;background:#d9d9d9;"></div>
<div style="left:167px;top:274px;width:1px;height:22px;background:#d9d9d9;"></div>
<div style="left:202px;top:274px;width:1px;height:22px;background:#d9d9d9;"></div>
<div style="left:399px;top:274px;width:1px;height:22px;background:#d9d9d9;"></div>
<div style="left:572px;top:274px;width:1px;height:22px;background:#d9d9d9;"></div>
<svg style="left:41.0px;top:280.5px" width="6" height="9" viewBox="0 0 6 9"><path d="M0.8 0.8L4.6 4.5L0.8 8.2" fill="none" stroke="#9a9a9a" stroke-width="1.3"/></svg>
<svg style="left:58px;top:279px" width="10" height="11" viewBox="0 0 10 11"><rect x="0.5" y="0.5" width="9" height="10" fill="url(#gReq)" stroke="#555"/><path d="M0 10.5H10" stroke="#333" stroke-width="1" opacity="0.8"/><rect x="2" y="2" width="4" height="1" fill="#b0b0b0"/><rect x="2" y="4" width="6" height="1" fill="#8a8a8a"/><rect x="2" y="6" width="6" height="1" fill="#5a5a5a"/><rect x="2" y="8" width="4" height="1" fill="#2e2e2e"/></svg>
<span class="t" style="left:77.00px;top:277.00px;font-size:11px;color:#333;letter-spacing:-0.197px;">2.1</span>
<span class="t" style="left:171.80px;top:277.00px;font-size:11px;color:#333;letter-spacing:0.416px;">#12</span>
<span class="t" style="left:206.00px;top:277.00px;font-size:11px;color:#333;letter-spacing:-0.087px;">Nominal behavior</span>
<svg style="left:402px;top:275px" width="170" height="19" viewBox="0 0 170 19"><rect x="1.05" y="0.85" width="167" height="17" rx="3.6" fill="#ffd011"/><rect x="1.05" y="0.85" width="167" height="17" rx="3.6" fill="none" stroke="#555" stroke-width="1.45"/></svg>
<div style="left:51px;top:296px;width:522px;height:1px;background:#d9d9d9;"></div>
<div style="left:51px;top:296px;width:1px;height:24px;background:#d9d9d9;"></div>
<div style="left:51px;top:296px;width:522px;height:23px;background:#cce8ff;border:1px dotted #f2842a;border-left-color:#f2a060;border-right-color:#f2a060;"></div>
<div style="left:167px;top:297px;width:1px;height:21px;background:#c6d6e2;"></div>
<div style="left:202px;top:297px;width:1px;height:21px;background:#c6d6e2;"></div>
<div style="left:399px;top:297px;width:1px;height:21px;background:#c6d6e2;"></div>
<div style="left:572px;top:297px;width:1px;height:21px;background:#d9d9d9;"></div>
<svg style="left:39.0px;top:304.5px" width="9" height="6" viewBox="0 0 9 6"><path d="M0.8 0.8L4.5 4.6L8.2 0.8" fill="none" stroke="#2a2a2a" stroke-width="1.5"/></svg>
<svg style="left:58px;top:302px" width="10" height="11" viewBox="0 0 10 11"><rect x="0.5" y="0.5" width="9" height="10" fill="#d6e8fa" stroke="#2f62a0"/><path d="M0 10.5H10" stroke="#333" stroke-width="1" opacity="0"/><rect x="2" y="2" width="4" height="1" fill="#7fa6d6"/><rect x="2" y="4" width="6" height="1" fill="#5f8fca"/><rect x="2" y="6" width="6" height="1" fill="#3f74b8"/><rect x="2" y="8" width="4" height="1" fill="#2f62a0"/></svg>
<span class="t" style="left:77.00px;top:300.00px;font-size:11px;color:#333;letter-spacing:-0.197px;">2.2</span>
<span class="t" style="left:171.80px;top:300.00px;font-size:11px;color:#333;letter-spacing:0.582px;">#8</span>
<span class="t" style="left:206.00px;top:300.00px;font-size:11px;color:#333;letter-spacing:-0.116px;">Exceptional conditions</span>
<svg style="left:402px;top:298px" width="170" height="19" viewBox="0 0 170 19"><rect x="1.05" y="0.85" width="167" height="17" rx="3.6" fill="#fff"/><clipPath id="bc4"><rect x="0" y="0" width="95.9" height="19"/></clipPath><rect x="1.05" y="0.85" width="167" height="17" rx="3.6" fill="#ffd011" clip-path="url(#bc4)"/><rect x="1.05" y="0.85" width="167" height="17" rx="3.6" fill="none" stroke="#555" stroke-width="1.45"/></svg>
<div style="left:51px;top:319px;width:522px;height:1px;background:#d9d9d9;"></div>
<div style="left:67px;top:319px;width:1px;height:24px;background:#d9d9d9;"></div>
<div style="left:167px;top:320px;width:1px;height:22px;background:#d9d9d9;"></div>
<div style="left:202px;top:320px;width:1px;height:22px;background:#d9d9d9;"></div>
<div style="left:399px;top:320px;width:1px;height:22px;background:#d9d9d9;"></div>
<div style="left:572px;top:320px;width:1px;height:22px;background:#d9d9d9;"></div>
<svg style="left:74px;top:325px" width="10" height="11" viewBox="0 0 10 11"><rect x="0.5" y="0.5" width="9" height="10" fill="url(#gReq)" stroke="#555"/><path d="M0 10.5H10" stroke="#333" stroke-width="1" opacity="0.8"/><rect x="2" y="2" width="4" height="1" fill="#b0b0b0"/><rect x="2" y="4" width="6" height="1" fill="#8a8a8a"/><rect x="2" y="6" width="6" height="1" fill="#5a5a5a"/><rect x="2" y="8" width="4" height="1" fill="#2e2e2e"/></svg>
<span class="t" style="left:93.00px;top:323.00px;font-size:11px;color:#333;letter-spacing:-0.053px;">2.2.1</span>
<span class="t" style="left:171.80px;top:323.00px;font-size:11px;color:#333;letter-spacing:0.582px;">#9</span>
<span class="t" style="left:206.00px;top:323.00px;font-size:11px;color:#333;letter-spacing:0.010px;">Returns -9 for invalid adjacency matr...</span>
<svg style="left:402px;top:321px" width="170" height="19" viewBox="0 0 170 19"><rect x="1.05" y="0.85" width="167" height="17" rx="3.6" fill="#fff"/><rect x="1.05" y="0.85" width="167" height="17" rx="3.6" fill="none" stroke="#555" stroke-width="1.45"/></svg>
<div style="left:67px;top:342px;width:506px;height:1px;background:#d9d9d9;"></div>
<div style="left:67px;top:342px;width:1px;height:24px;background:#d9d9d9;"></div>
<div style="left:167px;top:343px;width:1px;height:22px;background:#d9d9d9;"></div>
<div style="left:202px;top:343px;width:1px;height:22px;background:#d9d9d9;"></div>
<div style="left:399px;top:343px;width:1px;height:22px;background:#d9d9d9;"></div>
<div style="left:572px;top:343px;width:1px;height:22px;background:#d9d9d9;"></div>
<svg style="left:74px;top:348px" width="10" height="11" viewBox="0 0 10 11"><rect x="0.5" y="0.5" width="9" height="10" fill="url(#gReq)" stroke="#555"/><path d="M0 10.5H10" stroke="#333" stroke-width="1" opacity="0.8"/><rect x="2" y="2" width="4" height="1" fill="#b0b0b0"/><rect x="2" y="4" width="6" height="1" fill="#8a8a8a"/><rect x="2" y="6" width="6" height="1" fill="#5a5a5a"/><rect x="2" y="8" width="4" height="1" fill="#2e2e2e"/></svg>
<span class="t" style="left:93.00px;top:346.00px;font-size:11px;color:#333;letter-spacing:-0.053px;">2.2.2</span>
<span class="t" style="left:171.80px;top:346.00px;font-size:11px;color:#333;letter-spacing:0.416px;">#10</span>
<span class="t" style="left:206.00px;top:346.00px;font-size:11px;color:#333;letter-spacing:0.009px;">Returns -19 if the start node is encod...</span>
<svg style="left:402px;top:344px" width="170" height="19" viewBox="0 0 170 19"><rect x="1.05" y="0.85" width="167" height="17" rx="3.6" fill="#fff"/><rect x="1.05" y="0.85" width="167" height="17" rx="3.6" fill="none" stroke="#555" stroke-width="1.45"/></svg>
<div style="left:67px;top:365px;width:506px;height:1px;background:#d9d9d9;"></div>
<div style="left:67px;top:365px;width:1px;height:24px;background:#d9d9d9;"></div>
<div style="left:167px;top:366px;width:1px;height:22px;background:#d9d9d9;"></div>
<div style="left:202px;top:366px;width:1px;height:22px;background:#d9d9d9;"></div>
<div style="left:399px;top:366px;width:1px;height:22px;background:#d9d9d9;"></div>
<div style="left:572px;top:366px;width:1px;height:22px;background:#d9d9d9;"></div>
<svg style="left:74px;top:371px" width="10" height="11" viewBox="0 0 10 11"><rect x="0.5" y="0.5" width="9" height="10" fill="url(#gReq)" stroke="#555"/><path d="M0 10.5H10" stroke="#333" stroke-width="1" opacity="0.8"/><rect x="2" y="2" width="4" height="1" fill="#b0b0b0"/><rect x="2" y="4" width="6" height="1" fill="#8a8a8a"/><rect x="2" y="6" width="6" height="1" fill="#5a5a5a"/><rect x="2" y="8" width="4" height="1" fill="#2e2e2e"/></svg>
<span class="t" style="left:93.00px;top:369.00px;font-size:11px;color:#333;letter-spacing:-0.053px;">2.2.3</span>
<span class="t" style="left:171.80px;top:369.00px;font-size:11px;color:#333;letter-spacing:0.688px;">#11</span>
<span class="t" style="left:206.00px;top:369.00px;font-size:11px;color:#333;letter-spacing:-0.028px;">Returns -29 if end node is encoded i...</span>
<svg style="left:402px;top:367px" width="170" height="19" viewBox="0 0 170 19"><rect x="1.05" y="0.85" width="167" height="17" rx="3.6" fill="#fff"/><rect x="1.05" y="0.85" width="167" height="17" rx="3.6" fill="none" stroke="#555" stroke-width="1.45"/></svg>
<div style="left:67px;top:388px;width:506px;height:1px;background:#d9d9d9;"></div>
<div style="left:67px;top:388px;width:1px;height:24px;background:#d9d9d9;"></div>
<div style="left:167px;top:389px;width:1px;height:22px;background:#d9d9d9;"></div>
<div style="left:202px;top:389px;width:1px;height:22px;background:#d9d9d9;"></div>
<div style="left:399px;top:389px;width:1px;height:22px;background:#d9d9d9;"></div>
<div style="left:572px;top:389px;width:1px;height:22px;background:#d9d9d9;"></div>
<svg style="left:74px;top:394px" width="10" height="11" viewBox="0 0 10 11"><rect x="0.5" y="0.5" width="9" height="10" fill="url(#gReq)" stroke="#555"/><path d="M0 10.5H10" stroke="#333" stroke-width="1" opacity="0.8"/><rect x="2" y="2" width="4" height="1" fill="#b0b0b0"/><rect x="2" y="4" width="6" height="1" fill="#8a8a8a"/><rect x="2" y="6" width="6" height="1" fill="#5a5a5a"/><rect x="2" y="8" width="4" height="1" fill="#2e2e2e"/></svg>
<span class="t" style="left:93.00px;top:392.00px;font-size:11px;color:#333;letter-spacing:-0.053px;">2.2.4</span>
<span class="t" style="left:171.80px;top:392.00px;font-size:11px;color:#333;letter-spacing:0.582px;">#6</span>
<span class="t" style="left:206.00px;top:392.00px;font-size:11px;color:#333;letter-spacing:0.130px;">Returns -99 if startIdx or endIdx &gt; n...</span>
<svg style="left:402px;top:390px" width="170" height="19" viewBox="0 0 170 19"><rect x="1.05" y="0.85" width="167" height="17" rx="3.6" fill="#ffd011"/><rect x="1.05" y="0.85" width="167" height="17" rx="3.6" fill="none" stroke="#555" stroke-width="1.45"/></svg>
<div style="left:67px;top:411px;width:506px;height:1px;background:#d9d9d9;"></div>
<div style="left:67px;top:411px;width:1px;height:24px;background:#d9d9d9;"></div>
<div style="left:167px;top:412px;width:1px;height:22px;background:#d9d9d9;"></div>
<div style="left:202px;top:412px;width:1px;height:22px;background:#d9d9d9;"></div>
<div style="left:399px;top:412px;width:1px;height:22px;background:#d9d9d9;"></div>
<div style="left:572px;top:412px;width:1px;height:22px;background:#d9d9d9;"></div>
<svg style="left:74px;top:417px" width="10" height="11" viewBox="0 0 10 11"><rect x="0.5" y="0.5" width="9" height="10" fill="url(#gReq)" stroke="#555"/><path d="M0 10.5H10" stroke="#333" stroke-width="1" opacity="0.8"/><rect x="2" y="2" width="4" height="1" fill="#b0b0b0"/><rect x="2" y="4" width="6" height="1" fill="#8a8a8a"/><rect x="2" y="6" width="6" height="1" fill="#5a5a5a"/><rect x="2" y="8" width="4" height="1" fill="#2e2e2e"/></svg>
<span class="t" style="left:93.00px;top:415.00px;font-size:11px;color:#333;letter-spacing:-0.053px;">2.2.5</span>
<span class="t" style="left:171.80px;top:415.00px;font-size:11px;color:#333;letter-spacing:0.582px;">#7</span>
<span class="t" style="left:206.00px;top:415.00px;font-size:11px;color:#333;letter-spacing:0.085px;">Returns -199 if startIdx or endIdx ar...</span>
<svg style="left:402px;top:413px" width="170" height="19" viewBox="0 0 170 19"><rect x="1.05" y="0.85" width="167" height="17" rx="3.6" fill="#ffd011"/><rect x="1.05" y="0.85" width="167" height="17" rx="3.6" fill="none" stroke="#555" stroke-width="1.45"/></svg>
<div style="left:67px;top:434px;width:506px;height:1px;background:#d9d9d9;"></div>
<div style="left:67px;top:434px;width:1px;height:24px;background:#d9d9d9;"></div>
<div style="left:167px;top:435px;width:1px;height:22px;background:#d9d9d9;"></div>
<div style="left:202px;top:435px;width:1px;height:22px;background:#d9d9d9;"></div>
<div style="left:399px;top:435px;width:1px;height:22px;background:#d9d9d9;"></div>
<div style="left:572px;top:435px;width:1px;height:22px;background:#d9d9d9;"></div>
<svg style="left:74px;top:440px" width="10" height="11" viewBox="0 0 10 11"><rect x="0.5" y="0.5" width="9" height="10" fill="url(#gReq)" stroke="#555"/><path d="M0 10.5H10" stroke="#333" stroke-width="1" opacity="0.8"/><rect x="2" y="2" width="4" height="1" fill="#b0b0b0"/><rect x="2" y="4" width="6" height="1" fill="#8a8a8a"/><rect x="2" y="6" width="6" height="1" fill="#5a5a5a"/><rect x="2" y="8" width="4" height="1" fill="#2e2e2e"/></svg>
<span class="t" style="left:93.00px;top:438.00px;font-size:11px;color:#333;letter-spacing:-0.053px;">2.2.6</span>
<span class="t" style="left:171.80px;top:438.00px;font-size:11px;color:#333;letter-spacing:0.582px;">#5</span>
<span class="t" style="left:206.00px;top:438.00px;font-size:11px;color:#333;letter-spacing:0.205px;">Returns 0 if startIdx == endIdx</span>
<svg style="left:402px;top:436px" width="170" height="19" viewBox="0 0 170 19"><rect x="1.05" y="0.85" width="167" height="17" rx="3.6" fill="#ffd011"/><rect x="1.05" y="0.85" width="167" height="17" rx="3.6" fill="none" stroke="#555" stroke-width="1.45"/></svg>
<div style="left:67px;top:457px;width:506px;height:1px;background:#d9d9d9;"></div>
<div style="left:67px;top:457px;width:1px;height:24px;background:#d9d9d9;"></div>
<div style="left:167px;top:458px;width:1px;height:22px;background:#d9d9d9;"></div>
<div style="left:202px;top:458px;width:1px;height:22px;background:#d9d9d9;"></div>
<div style="left:399px;top:458px;width:1px;height:22px;background:#d9d9d9;"></div>
<div style="left:572px;top:458px;width:1px;height:22px;background:#d9d9d9;"></div>
<svg style="left:74px;top:463px" width="10" height="11" viewBox="0 0 10 11"><rect x="0.5" y="0.5" width="9" height="10" fill="url(#gReq)" stroke="#555"/><path d="M0 10.5H10" stroke="#333" stroke-width="1" opacity="0.8"/><rect x="2" y="2" width="4" height="1" fill="#b0b0b0"/><rect x="2" y="4" width="6" height="1" fill="#8a8a8a"/><rect x="2" y="6" width="6" height="1" fill="#5a5a5a"/><rect x="2" y="8" width="4" height="1" fill="#2e2e2e"/></svg>
<span class="t" style="left:93.00px;top:461.00px;font-size:11px;color:#333;letter-spacing:-0.053px;">2.2.7</span>
<span class="t" style="left:171.80px;top:461.00px;font-size:11px;color:#333;letter-spacing:0.582px;">#4</span>
<span class="t" style="left:206.00px;top:461.00px;font-size:11px;color:#333;letter-spacing:0.101px;">Returns -1 if no path from startIdx to...</span>
<svg style="left:402px;top:459px" width="170" height="19" viewBox="0 0 170 19"><rect x="1.05" y="0.85" width="167" height="17" rx="3.6" fill="#ffd011"/><rect x="1.05" y="0.85" width="167" height="17" rx="3.6" fill="none" stroke="#555" stroke-width="1.45"/></svg>
<div style="left:19px;top:480px;width:554px;height:1px;background:#d9d9d9;"></div>
<div style="left:19px;top:480px;width:1px;height:24px;background:#d9d9d9;"></div>
<div style="left:167px;top:481px;width:1px;height:22px;background:#d9d9d9;"></div>
<div style="left:202px;top:481px;width:1px;height:22px;background:#d9d9d9;"></div>
<div style="left:399px;top:481px;width:1px;height:22px;background:#d9d9d9;"></div>
<div style="left:572px;top:481px;width:1px;height:22px;background:#d9d9d9;"></div>
<div style="left:168px;top:481px;width:34px;height:22px;background:#f7f7f7;"></div>
<svg style="left:7.0px;top:488.5px" width="9" height="6" viewBox="0 0 9 6"><path d="M0.8 0.8L4.5 4.6L8.2 0.8" fill="none" stroke="#2a2a2a" stroke-width="1.5"/></svg>
<svg style="left:23px;top:483px" width="13" height="16" viewBox="0 0 13 16"><path d="M0.5 0.5H9L12.5 4V15.5H0.5Z" fill="#fff" stroke="#8f869c" stroke-width="0.9"/><path d="M9 0.5V4H12.5" fill="none" stroke="#a9a9b0" stroke-width="0.8"/><path d="M2.5 1.8V6.2H4.2M4.2 3.5V8.8M6.8 6.4H9.3V10" fill="none" stroke="#5a6a8a" stroke-width="0.9"/><path d="M4.2 4.2L7.6 6.4L4.2 8.6Z" fill="#1f6fd0"/><rect x="7.3" y="10.3" width="3.6" height="3.6" fill="#e8641c" stroke="#8c1a0a" stroke-width="0.9"/></svg>
<span class="t" style="left:41.70px;top:484.00px;font-size:11px;color:#333;letter-spacing:-0.042px;">shortest_path_tests_reqs</span>
<svg style="left:402px;top:482px" width="170" height="19" viewBox="0 0 170 19"><rect x="1.05" y="0.85" width="167" height="17" rx="3.6" fill="#fff"/><clipPath id="bc12"><rect x="0" y="0" width="154.9" height="19"/></clipPath><rect x="1.05" y="0.85" width="167" height="17" rx="3.6" fill="#ffd011" clip-path="url(#bc12)"/><rect x="1.05" y="0.85" width="167" height="17" rx="3.6" fill="none" stroke="#555" stroke-width="1.45"/></svg>
<div style="left:19px;top:503px;width:554px;height:1px;background:#d9d9d9;"></div>
<div style="left:35px;top:503px;width:1px;height:24px;background:#d9d9d9;"></div>
<div style="left:167px;top:504px;width:1px;height:22px;background:#d9d9d9;"></div>
<div style="left:202px;top:504px;width:1px;height:22px;background:#d9d9d9;"></div>
<div style="left:399px;top:504px;width:1px;height:22px;background:#d9d9d9;"></div>
<div style="left:572px;top:504px;width:1px;height:22px;background:#d9d9d9;"></div>
<svg style="left:42px;top:509px" width="10" height="11" viewBox="0 0 10 11"><rect x="0.5" y="0.5" width="9" height="10" fill="url(#gReq)" stroke="#555"/><path d="M0 10.5H10" stroke="#333" stroke-width="1" opacity="0.8"/><rect x="2" y="2" width="4" height="1" fill="#b0b0b0"/><rect x="2" y="4" width="6" height="1" fill="#8a8a8a"/><rect x="2" y="6" width="6" height="1" fill="#5a5a5a"/><rect x="2" y="8" width="4" height="1" fill="#2e2e2e"/></svg>
<span class="t" style="left:61.00px;top:507.00px;font-size:11px;color:#333;">1</span>
<span class="t" style="left:171.80px;top:507.00px;font-size:11px;color:#333;letter-spacing:0.582px;">#1</span>
<span class="t" style="left:206.00px;top:507.00px;font-size:11px;color:#333;letter-spacing:-0.193px;">Overview</span>
<div style="left:35px;top:526px;width:538px;height:1px;background:#d9d9d9;"></div>
<div style="left:35px;top:526px;width:1px;height:24px;background:#d9d9d9;"></div>
<div style="left:167px;top:527px;width:1px;height:22px;background:#d9d9d9;"></div>
<div style="left:202px;top:527px;width:1px;height:22px;background:#d9d9d9;"></div>
<div style="left:399px;top:527px;width:1px;height:22px;background:#d9d9d9;"></div>
<div style="left:572px;top:527px;width:1px;height:22px;background:#d9d9d9;"></div>
<svg style="left:23.0px;top:534.5px" width="9" height="6" viewBox="0 0 9 6"><path d="M0.8 0.8L4.5 4.6L8.2 0.8" fill="none" stroke="#2a2a2a" stroke-width="1.5"/></svg>
<svg style="left:42px;top:532px" width="10" height="11" viewBox="0 0 10 11"><rect x="0.5" y="0.5" width="9" height="10" fill="url(#gReq)" stroke="#555"/><path d="M0 10.5H10" stroke="#333" stroke-width="1" opacity="0.8"/><rect x="2" y="2" width="4" height="1" fill="#b0b0b0"/><rect x="2" y="4" width="6" height="1" fill="#8a8a8a"/><rect x="2" y="6" width="6" height="1" fill="#5a5a5a"/><rect x="2" y="8" width="4" height="1" fill="#2e2e2e"/></svg>
<span class="t" style="left:61.00px;top:530.00px;font-size:11px;color:#333;">2</span>
<span class="t" style="left:171.80px;top:530.00px;font-size:11px;color:#333;letter-spacing:0.582px;">#2</span>
<span class="t" style="left:206.00px;top:530.00px;font-size:11px;color:#333;letter-spacing:-0.251px;">Test Cases</span>
<svg style="left:402px;top:528px" width="170" height="19" viewBox="0 0 170 19"><rect x="1.05" y="0.85" width="167" height="17" rx="3.6" fill="#fff"/><clipPath id="bc14"><rect x="0" y="0" width="154.9" height="19"/></clipPath><rect x="1.05" y="0.85" width="167" height="17" rx="3.6" fill="#ffd011" clip-path="url(#bc14)"/><rect x="1.05" y="0.85" width="167" height="17" rx="3.6" fill="none" stroke="#555" stroke-width="1.45"/></svg>
<div style="left:35px;top:549px;width:538px;height:1px;background:#d9d9d9;"></div>
<div style="left:51px;top:549px;width:1px;height:24px;background:#d9d9d9;"></div>
<div style="left:167px;top:550px;width:1px;height:22px;background:#d9d9d9;"></div>
<div style="left:202px;top:550px;width:1px;height:22px;background:#d9d9d9;"></div>
<div style="left:399px;top:550px;width:1px;height:22px;background:#d9d9d9;"></div>
<div style="left:572px;top:550px;width:1px;height:22px;background:#d9d9d9;"></div>
<svg style="left:39.0px;top:557.5px" width="9" height="6" viewBox="0 0 9 6"><path d="M0.8 0.8L4.5 4.6L8.2 0.8" fill="none" stroke="#2a2a2a" stroke-width="1.5"/></svg>
<svg style="left:58px;top:555px" width="10" height="11" viewBox="0 0 10 11"><rect x="0.5" y="0.5" width="9" height="10" fill="url(#gReq)" stroke="#555"/><path d="M0 10.5H10" stroke="#333" stroke-width="1" opacity="0.8"/><rect x="2" y="2" width="4" height="1" fill="#b0b0b0"/><rect x="2" y="4" width="6" height="1" fill="#8a8a8a"/><rect x="2" y="6" width="6" height="1" fill="#5a5a5a"/><rect x="2" y="8" width="4" height="1" fill="#2e2e2e"/></svg>
<span class="t" style="left:77.00px;top:553.00px;font-size:11px;color:#333;letter-spacing:-0.197px;">2.1</span>
<span class="t" style="left:171.80px;top:553.00px;font-size:11px;color:#333;letter-spacing:0.416px;">#22</span>
<span class="t" style="left:206.00px;top:553.00px;font-size:11px;color:#333;letter-spacing:-0.081px;">Nominal Mode Tests</span>
<svg style="left:402px;top:551px" width="170" height="19" viewBox="0 0 170 19"><rect x="1.05" y="0.85" width="167" height="17" rx="3.6" fill="#fff"/><clipPath id="bc15"><rect x="0" y="0" width="149.0" height="19"/></clipPath><rect x="1.05" y="0.85" width="167" height="17" rx="3.6" fill="#ffd011" clip-path="url(#bc15)"/><rect x="1.05" y="0.85" width="167" height="17" rx="3.6" fill="none" stroke="#555" stroke-width="1.45"/></svg>
<div style="left:51px;top:572px;width:522px;height:1px;background:#d9d9d9;"></div>
<div style="left:67px;top:572px;width:1px;height:24px;background:#d9d9d9;"></div>
<div style="left:167px;top:573px;width:1px;height:22px;background:#d9d9d9;"></div>
<div style="left:202px;top:573px;width:1px;height:22px;background:#d9d9d9;"></div>
<div style="left:399px;top:573px;width:1px;height:22px;background:#d9d9d9;"></div>
<div style="left:572px;top:573px;width:1px;height:22px;background:#d9d9d9;"></div>
<svg style="left:74px;top:578px" width="10" height="11" viewBox="0 0 10 11"><rect x="0.5" y="0.5" width="9" height="10" fill="url(#gReq)" stroke="#555"/><path d="M0 10.5H10" stroke="#333" stroke-width="1" opacity="0.8"/><rect x="2" y="2" width="4" height="1" fill="#b0b0b0"/><rect x="2" y="4" width="6" height="1" fill="#8a8a8a"/><rect x="2" y="6" width="6" height="1" fill="#5a5a5a"/><rect x="2" y="8" width="4" height="1" fill="#2e2e2e"/></svg>
<span class="t" style="left:93.00px;top:576.00px;font-size:11px;color:#333;letter-spacing:-0.053px;">2.1.1</span>
<span class="t" style="left:171.80px;top:576.00px;font-size:11px;color:#333;letter-spacing:0.582px;">#8</span>
<span class="t" style="left:206.00px;top:576.00px;font-size:11px;color:#333;letter-spacing:0.098px;">Test for path length 1</span>
<svg style="left:402px;top:574px" width="170" height="19" viewBox="0 0 170 19"><rect x="1.05" y="0.85" width="167" height="17" rx="3.6" fill="#ffd011"/><rect x="1.05" y="0.85" width="167" height="17" rx="3.6" fill="none" stroke="#555" stroke-width="1.45"/></svg>
<div style="left:67px;top:595px;width:506px;height:1px;background:#d9d9d9;"></div>
<div style="left:67px;top:595px;width:1px;height:24px;background:#d9d9d9;"></div>
<div style="left:167px;top:596px;width:1px;height:22px;background:#d9d9d9;"></div>
<div style="left:202px;top:596px;width:1px;height:22px;background:#d9d9d9;"></div>
<div style="left:399px;top:596px;width:1px;height:22px;background:#d9d9d9;"></div>
<div style="left:572px;top:596px;width:1px;height:22px;background:#d9d9d9;"></div>
<svg style="left:74px;top:601px" width="10" height="11" viewBox="0 0 10 11"><rect x="0.5" y="0.5" width="9" height="10" fill="url(#gReq)" stroke="#555"/><path d="M0 10.5H10" stroke="#333" stroke-width="1" opacity="0.8"/><rect x="2" y="2" width="4" height="1" fill="#b0b0b0"/><rect x="2" y="4" width="6" height="1" fill="#8a8a8a"/><rect x="2" y="6" width="6" height="1" fill="#5a5a5a"/><rect x="2" y="8" width="4" height="1" fill="#2e2e2e"/></svg>
<span class="t" style="left:93.00px;top:599.00px;font-size:11px;color:#333;letter-spacing:-0.053px;">2.1.2</span>
<span class="t" style="left:171.80px;top:599.00px;font-size:11px;color:#333;letter-spacing:0.582px;">#6</span>
<span class="t" style="left:206.00px;top:599.00px;font-size:11px;color:#333;letter-spacing:0.039px;">Test for a simple graph with no cycles</span>
<svg style="left:402px;top:597px" width="170" height="19" viewBox="0 0 170 19"><rect x="1.05" y="0.85" width="167" height="17" rx="3.6" fill="#ffd011"/><rect x="1.05" y="0.85" width="167" height="17" rx="3.6" fill="none" stroke="#555" stroke-width="1.45"/></svg>
<div style="left:67px;top:618px;width:506px;height:1px;background:#d9d9d9;"></div>
<div style="left:67px;top:618px;width:1px;height:24px;background:#d9d9d9;"></div>
<div style="left:167px;top:619px;width:1px;height:22px;background:#d9d9d9;"></div>
<div style="left:202px;top:619px;width:1px;height:22px;background:#d9d9d9;"></div>
<div style="left:399px;top:619px;width:1px;height:22px;background:#d9d9d9;"></div>
<div style="left:572px;top:619px;width:1px;height:22px;background:#d9d9d9;"></div>
<svg style="left:74px;top:624px" width="10" height="11" viewBox="0 0 10 11"><rect x="0.5" y="0.5" width="9" height="10" fill="url(#gReq)" stroke="#555"/><path d="M0 10.5H10" stroke="#333" stroke-width="1" opacity="0.8"/><rect x="2" y="2" width="4" height="1" fill="#b0b0b0"/><rect x="2" y="4" width="6" height="1" fill="#8a8a8a"/><rect x="2" y="6" width="6" height="1" fill="#5a5a5a"/><rect x="2" y="8" width="4" height="1" fill="#2e2e2e"/></svg>
<span class="t" style="left:93.00px;top:622.00px;font-size:11px;color:#333;letter-spacing:-0.053px;">2.1.3</span>
<span class="t" style="left:171.80px;top:622.00px;font-size:11px;color:#333;letter-spacing:0.582px;">#7</span>
<span class="t" style="left:206.00px;top:622.00px;font-size:11px;color:#333;letter-spacing:0.116px;">Test for a graph that is a tree</span>
<svg style="left:402px;top:620px" width="170" height="19" viewBox="0 0 170 19"><rect x="1.05" y="0.85" width="167" height="17" rx="3.6" fill="#fff"/><rect x="1.05" y="0.85" width="167" height="17" rx="3.6" fill="none" stroke="#555" stroke-width="1.45"/></svg>
<div style="left:67px;top:641px;width:506px;height:1px;background:#d9d9d9;"></div>
<div style="left:67px;top:641px;width:1px;height:24px;background:#d9d9d9;"></div>
<div style="left:167px;top:642px;width:1px;height:22px;background:#d9d9d9;"></div>
<div style="left:202px;top:642px;width:1px;height:22px;background:#d9d9d9;"></div>
<div style="left:399px;top:642px;width:1px;height:22px;background:#d9d9d9;"></div>
<div style="left:572px;top:642px;width:1px;height:22px;background:#d9d9d9;"></div>
<svg style="left:74px;top:647px" width="10" height="11" viewBox="0 0 10 11"><rect x="0.5" y="0.5" width="9" height="10" fill="url(#gReq)" stroke="#555"/><path d="M0 10.5H10" stroke="#333" stroke-width="1" opacity="0.8"/><rect x="2" y="2" width="4" height="1" fill="#b0b0b0"/><rect x="2" y="4" width="6" height="1" fill="#8a8a8a"/><rect x="2" y="6" width="6" height="1" fill="#5a5a5a"/><rect x="2" y="8" width="4" height="1" fill="#2e2e2e"/></svg>
<span class="t" style="left:93.00px;top:645.00px;font-size:11px;color:#333;letter-spacing:-0.053px;">2.1.4</span>
<span class="t" style="left:171.80px;top:645.00px;font-size:11px;color:#333;letter-spacing:0.582px;">#5</span>
<span class="t" style="left:206.00px;top:645.00px;font-size:11px;color:#333;letter-spacing:0.033px;">Test for a graph that contains cycles</span>
<svg style="left:402px;top:643px" width="170" height="19" viewBox="0 0 170 19"><rect x="1.05" y="0.85" width="167" height="17" rx="3.6" fill="#ffd011"/><rect x="1.05" y="0.85" width="167" height="17" rx="3.6" fill="none" stroke="#555" stroke-width="1.45"/></svg>
<div style="left:67px;top:664px;width:506px;height:1px;background:#d9d9d9;"></div>
<div style="left:67px;top:664px;width:1px;height:24px;background:#d9d9d9;"></div>
<div style="left:167px;top:665px;width:1px;height:22px;background:#d9d9d9;"></div>
<div style="left:202px;top:665px;width:1px;height:22px;background:#d9d9d9;"></div>
<div style="left:399px;top:665px;width:1px;height:22px;background:#d9d9d9;"></div>
<div style="left:572px;top:665px;width:1px;height:22px;background:#d9d9d9;"></div>
<svg style="left:74px;top:670px" width="10" height="11" viewBox="0 0 10 11"><rect x="0.5" y="0.5" width="9" height="10" fill="url(#gReq)" stroke="#555"/><path d="M0 10.5H10" stroke="#333" stroke-width="1" opacity="0.8"/><rect x="2" y="2" width="4" height="1" fill="#b0b0b0"/><rect x="2" y="4" width="6" height="1" fill="#8a8a8a"/><rect x="2" y="6" width="6" height="1" fill="#5a5a5a"/><rect x="2" y="8" width="4" height="1" fill="#2e2e2e"/></svg>
<span class="t" style="left:93.00px;top:668.00px;font-size:11px;color:#333;letter-spacing:-0.053px;">2.1.5</span>
<span class="t" style="left:171.80px;top:668.00px;font-size:11px;color:#333;letter-spacing:0.582px;">#3</span>
<span class="t" style="left:206.00px;top:668.00px;font-size:11px;color:#333;letter-spacing:0.067px;">Test when shortest path is not unique</span>
<svg style="left:402px;top:666px" width="170" height="19" viewBox="0 0 170 19"><rect x="1.05" y="0.85" width="167" height="17" rx="3.6" fill="#ffd011"/><rect x="1.05" y="0.85" width="167" height="17" rx="3.6" fill="none" stroke="#555" stroke-width="1.45"/></svg>
<div style="left:67px;top:687px;width:506px;height:1px;background:#d9d9d9;"></div>
<div style="left:67px;top:687px;width:1px;height:24px;background:#d9d9d9;"></div>
<div style="left:167px;top:688px;width:1px;height:22px;background:#d9d9d9;"></div>
<div style="left:202px;top:688px;width:1px;height:22px;background:#d9d9d9;"></div>
<div style="left:399px;top:688px;width:1px;height:22px;background:#d9d9d9;"></div>
<div style="left:572px;top:688px;width:1px;height:22px;background:#d9d9d9;"></div>
<svg style="left:74px;top:693px" width="10" height="11" viewBox="0 0 10 11"><rect x="0.5" y="0.5" width="9" height="10" fill="url(#gReq)" stroke="#555"/><path d="M0 10.5H10" stroke="#333" stroke-width="1" opacity="0.8"/><rect x="2" y="2" width="4" height="1" fill="#b0b0b0"/><rect x="2" y="4" width="6" height="1" fill="#8a8a8a"/><rect x="2" y="6" width="6" height="1" fill="#5a5a5a"/><rect x="2" y="8" width="4" height="1" fill="#2e2e2e"/></svg>
<span class="t" style="left:93.00px;top:691.00px;font-size:11px;color:#333;letter-spacing:-0.053px;">2.1.6</span>
<span class="t" style="left:171.80px;top:691.00px;font-size:11px;color:#333;letter-spacing:0.582px;">#4</span>
<span class="t" style="left:206.00px;top:691.00px;font-size:11px;color:#333;letter-spacing:0.053px;">Test for path length N where N is nu...</span>
<svg style="left:402px;top:689px" width="170" height="19" viewBox="0 0 170 19"><rect x="1.05" y="0.85" width="167" height="17" rx="3.6" fill="#ffd011"/><rect x="1.05" y="0.85" width="167" height="17" rx="3.6" fill="none" stroke="#555" stroke-width="1.45"/></svg>
<div style="left:67px;top:710px;width:506px;height:1px;background:#d9d9d9;"></div>
<div style="left:67px;top:710px;width:1px;height:24px;background:#d9d9d9;"></div>
<div style="left:167px;top:711px;width:1px;height:22px;background:#d9d9d9;"></div>
<div style="left:202px;top:711px;width:1px;height:22px;background:#d9d9d9;"></div>
<div style="left:399px;top:711px;width:1px;height:22px;background:#d9d9d9;"></div>
<div style="left:572px;top:711px;width:1px;height:22px;background:#d9d9d9;"></div>
<svg style="left:74px;top:716px" width="10" height="11" viewBox="0 0 10 11"><rect x="0.5" y="0.5" width="9" height="10" fill="url(#gReq)" stroke="#555"/><path d="M0 10.5H10" stroke="#333" stroke-width="1" opacity="0.8"/><rect x="2" y="2" width="4" height="1" fill="#b0b0b0"/><rect x="2" y="4" width="6" height="1" fill="#8a8a8a"/><rect x="2" y="6" width="6" height="1" fill="#5a5a5a"/><rect x="2" y="8" width="4" height="1" fill="#2e2e2e"/></svg>
<span class="t" style="left:93.00px;top:714.00px;font-size:11px;color:#333;letter-spacing:-0.053px;">2.1.7</span>
<span class="t" style="left:171.80px;top:714.00px;font-size:11px;color:#333;letter-spacing:0.416px;">#10</span>
<span class="t" style="left:206.00px;top:714.00px;font-size:11px;color:#333;letter-spacing:-0.007px;">Test a graph which has no edges</span>
<svg style="left:402px;top:712px" width="170" height="19" viewBox="0 0 170 19"><rect x="1.05" y="0.85" width="167" height="17" rx="3.6" fill="#ffd011"/><rect x="1.05" y="0.85" width="167" height="17" rx="3.6" fill="none" stroke="#555" stroke-width="1.45"/></svg>
<div style="left:67px;top:733px;width:506px;height:1px;background:#d9d9d9;"></div>
<div style="left:67px;top:733px;width:1px;height:24px;background:#d9d9d9;"></div>
<div style="left:167px;top:734px;width:1px;height:22px;background:#d9d9d9;"></div>
<div style="left:202px;top:734px;width:1px;height:22px;background:#d9d9d9;"></div>
<div style="left:399px;top:734px;width:1px;height:22px;background:#d9d9d9;"></div>
<div style="left:572px;top:734px;width:1px;height:22px;background:#d9d9d9;"></div>
<svg style="left:74px;top:739px" width="10" height="11" viewBox="0 0 10 11"><rect x="0.5" y="0.5" width="9" height="10" fill="url(#gReq)" stroke="#555"/><path d="M0 10.5H10" stroke="#333" stroke-width="1" opacity="0.8"/><rect x="2" y="2" width="4" height="1" fill="#b0b0b0"/><rect x="2" y="4" width="6" height="1" fill="#8a8a8a"/><rect x="2" y="6" width="6" height="1" fill="#5a5a5a"/><rect x="2" y="8" width="4" height="1" fill="#2e2e2e"/></svg>
<span class="t" style="left:93.00px;top:737.00px;font-size:11px;color:#333;letter-spacing:-0.053px;">2.1.8</span>
<span class="t" style="left:171.80px;top:737.00px;font-size:11px;color:#333;letter-spacing:0.416px;">#12</span>
<span class="t" style="left:206.00px;top:737.00px;font-size:11px;color:#333;letter-spacing:0.078px;">Test a graph starting from a node wit...</span>
<svg style="left:402px;top:735px" width="170" height="19" viewBox="0 0 170 19"><rect x="1.05" y="0.85" width="167" height="17" rx="3.6" fill="#ffd011"/><rect x="1.05" y="0.85" width="167" height="17" rx="3.6" fill="none" stroke="#555" stroke-width="1.45"/></svg>
<div style="left:67px;top:756px;width:506px;height:1px;background:#d9d9d9;"></div>
<div style="left:67px;top:756px;width:1px;height:24px;background:#d9d9d9;"></div>
<div style="left:167px;top:757px;width:1px;height:22px;background:#d9d9d9;"></div>
<div style="left:202px;top:757px;width:1px;height:22px;background:#d9d9d9;"></div>
<div style="left:399px;top:757px;width:1px;height:22px;background:#d9d9d9;"></div>
<div style="left:572px;top:757px;width:1px;height:22px;background:#d9d9d9;"></div>
<svg style="left:74px;top:762px" width="10" height="11" viewBox="0 0 10 11"><rect x="0.5" y="0.5" width="9" height="10" fill="url(#gReq)" stroke="#555"/><path d="M0 10.5H10" stroke="#333" stroke-width="1" opacity="0.8"/><rect x="2" y="2" width="4" height="1" fill="#b0b0b0"/><rect x="2" y="4" width="6" height="1" fill="#8a8a8a"/><rect x="2" y="6" width="6" height="1" fill="#5a5a5a"/><rect x="2" y="8" width="4" height="1" fill="#2e2e2e"/></svg>
<span class="t" style="left:93.00px;top:760.00px;font-size:11px;color:#333;letter-spacing:-0.053px;">2.1.9</span>
<span class="t" style="left:171.80px;top:760.00px;font-size:11px;color:#333;letter-spacing:0.416px;">#13</span>
<span class="t" style="left:206.00px;top:760.00px;font-size:11px;color:#333;letter-spacing:0.056px;">Test a graph ending on a node with ...</span>
<svg style="left:402px;top:758px" width="170" height="19" viewBox="0 0 170 19"><rect x="1.05" y="0.85" width="167" height="17" rx="3.6" fill="#ffd011"/><rect x="1.05" y="0.85" width="167" height="17" rx="3.6" fill="none" stroke="#555" stroke-width="1.45"/></svg>
<div style="left:51px;top:779px;width:522px;height:1px;background:#d9d9d9;"></div>
<div style="left:51px;top:779px;width:1px;height:24px;background:#d9d9d9;"></div>
<div style="left:167px;top:780px;width:1px;height:22px;background:#d9d9d9;"></div>
<div style="left:202px;top:780px;width:1px;height:22px;background:#d9d9d9;"></div>
<div style="left:399px;top:780px;width:1px;height:22px;background:#d9d9d9;"></div>
<div style="left:572px;top:780px;width:1px;height:22px;background:#d9d9d9;"></div>
<svg style="left:41.0px;top:786.5px" width="6" height="9" viewBox="0 0 6 9"><path d="M0.8 0.8L4.6 4.5L0.8 8.2" fill="none" stroke="#9a9a9a" stroke-width="1.3"/></svg>
<svg style="left:58px;top:785px" width="10" height="11" viewBox="0 0 10 11"><rect x="0.5" y="0.5" width="9" height="10" fill="url(#gReq)" stroke="#555"/><path d="M0 10.5H10" stroke="#333" stroke-width="1" opacity="0.8"/><rect x="2" y="2" width="4" height="1" fill="#b0b0b0"/><rect x="2" y="4" width="6" height="1" fill="#8a8a8a"/><rect x="2" y="6" width="6" height="1" fill="#5a5a5a"/><rect x="2" y="8" width="4" height="1" fill="#2e2e2e"/></svg>
<span class="t" style="left:77.00px;top:783.00px;font-size:11px;color:#333;letter-spacing:-0.197px;">2.2</span>
<span class="t" style="left:171.80px;top:783.00px;font-size:11px;color:#333;letter-spacing:0.416px;">#15</span>
<span class="t" style="left:206.00px;top:783.00px;font-size:11px;color:#333;letter-spacing:0.025px;">Tests for invalid conditions</span>
<svg style="left:402px;top:781px" width="170" height="19" viewBox="0 0 170 19"><rect x="1.05" y="0.85" width="167" height="17" rx="3.6" fill="#ffd011"/><rect x="1.05" y="0.85" width="167" height="17" rx="3.6" fill="none" stroke="#555" stroke-width="1.45"/></svg>
<div style="left:51px;top:802px;width:522px;height:1px;background:#d9d9d9;"></div>
<div style="left:51px;top:779px;width:1px;height:24px;background:#d9d9d9;"></div>
<div style="left:582px;top:152px;width:399px;height:661px;background:#fafafa;"></div>
<div style="left:578px;top:152px;width:4px;height:661px;background:#f0f0f0;"></div>
<div style="left:582px;top:151px;width:399px;height:30px;background:#fafafa;border:1px solid #b0b0b0;border-top-color:#858585;border-right-color:#8a8a8a;"></div>
<span class="t" style="left:593.00px;top:157.70px;font-size:11px;color:#1a1a1a;letter-spacing:-0.388px;">Requirement: #8</span>
<div style="left:586px;top:185px;width:391px;height:1px;background:#dadada;"></div>
<div style="left:586px;top:188px;width:391px;height:18px;background:#fff;"></div>
<div style="left:586px;top:208px;width:391px;height:1px;background:#dadada;"></div>
<svg style="left:589px;top:194px" width="9.4" height="5.4" viewBox="0 0 9.4 5.4"><path d="M0 0H9.4L4.7 5.4Z" fill="#000"/></svg>
<span class="t" style="left:602.40px;top:189.60px;font-size:12px;color:#000;font-weight:bold;letter-spacing:0.214px;">Properties</span>
<span class="t" style="left:590.00px;top:216.70px;font-size:11px;color:#1a1a1a;letter-spacing:-0.041px;">Type:</span>
<div style="left:654px;top:215px;width:93px;height:20px;background:#e1e1e1;border:1px solid #adadad;"></div>
<span class="t" style="left:658.00px;top:217.50px;font-size:11px;color:#1a1a1a;">Container</span>
<svg style="left:733px;top:222.5px" width="9" height="5" viewBox="0 0 9 5"><path d="M0 0H9L4.5 5Z" fill="#000"/></svg>
<span class="t" style="left:590.00px;top:240.00px;font-size:11px;color:#1a1a1a;letter-spacing:0.056px;">Index:</span>
<span class="t" style="left:652.20px;top:240.00px;font-size:11px;color:#1a1a1a;letter-spacing:-0.197px;">2.2</span>
<span class="t" style="left:590.00px;top:261.60px;font-size:11px;color:#1a1a1a;letter-spacing:-0.051px;">Custom ID:</span>
<div style="left:654px;top:260px;width:318px;height:20px;background:#fff;border:1px solid #7a7a7a;"></div>
<span class="t" style="left:658.50px;top:262.50px;font-size:11px;color:#9a9a9a;">#8</span>
<span class="t" style="left:590.00px;top:287.70px;font-size:11px;color:#1a1a1a;letter-spacing:-0.140px;">Summary:</span>
<div style="left:654px;top:286px;width:318px;height:20px;background:#fff;border:1px solid #7a7a7a;"></div>
<span class="t" style="left:658.50px;top:288.50px;font-size:11px;color:#1a1a1a;letter-spacing:-0.112px;">Exceptional conditions</span>
<div style="left:588px;top:334px;width:385px;height:249px;background:#fff;border:1px solid #dcdcdc;"></div>
<div style="left:667px;top:317px;width:66px;height:18px;background:#f0f0f0;border:1px solid #d9d9d9;"></div>
<div style="left:588px;top:314px;width:80px;height:21px;background:#fff;border:1px solid #d9d9d9;border-bottom:none;"></div>
<span class="t" style="left:600.50px;top:318.00px;font-size:11px;color:#1a1a1a;letter-spacing:-0.138px;">Description</span>
<span class="t" style="left:678.00px;top:318.00px;font-size:11px;color:#1a1a1a;letter-spacing:-0.164px;">Rationale</span>
<svg style="left:597px;top:343px" width="17" height="17" viewBox="0 0 17 17"><path d="M0.5 0.5H7.5L11 4V13.5H0.5Z" fill="url(#gDoc)" stroke="#a9b4c2" stroke-width="0.9"/><path d="M7.5 0.5V4H11" fill="#fff" stroke="#b9c2cc" stroke-width="0.7"/><text x="1.0" y="10.3" font-family="Liberation Sans, sans-serif" font-size="8.6" font-weight="bold" fill="#2b72d0">w</text><path d="M7.8 15L8.6 12.4L14.2 6.8L16 8.6L10.4 14.2Z" fill="#e8a862" stroke="#9a6a3a" stroke-width="0.7" stroke-linejoin="round"/><path d="M7.8 15L8.6 12.4L10.4 14.2Z" fill="#3a3a3a"/><path d="M13.4 7.6L15.2 9.4L16 8.6L14.2 6.8Z" fill="#d77a7a"/></svg>
<div style="left:622px;top:341px;width:1px;height:20px;background:#c8c8c8;"></div>
<div style="left:627px;top:341px;width:52px;height:20px;background:#fff;border:1px solid #7a7a7a;"></div>
<span class="t" style="left:633.20px;top:342.60px;font-size:11px;color:#1a1a1a;letter-spacing:-0.501px;">Arial</span>
<svg style="left:665.5px;top:349px" width="9" height="6" viewBox="0 0 9 6"><path d="M0.5 0.7L4.5 4.8L8.5 0.7" fill="none" stroke="#333" stroke-width="1"/></svg>
<div style="left:680px;top:341px;width:45px;height:20px;background:#fff;border:1px solid #7a7a7a;"></div>
<span class="t" style="left:686.30px;top:342.60px;font-size:11px;color:#1a1a1a;">10</span>
<svg style="left:711.5px;top:349px" width="9" height="6" viewBox="0 0 9 6"><path d="M0.5 0.7L4.5 4.8L8.5 0.7" fill="none" stroke="#333" stroke-width="1"/></svg>
<div style="left:731px;top:343px;width:16px;height:16px;background:#efefef;"></div>
<span class="t" style="left:731px;top:342.4px;width:16px;text-align:center;font-family:'Liberation Serif',serif;font-size:13.5px;color:#000;font-weight:bold;">B</span>
<div style="left:759px;top:343px;width:16px;height:16px;background:#efefef;"></div>
<span class="t" style="left:759px;top:342.4px;width:16px;text-align:center;font-family:'Liberation Serif',serif;font-size:13.5px;color:#000;font-weight:bold;font-style:italic;">I</span>
<div style="left:787px;top:343px;width:16px;height:16px;background:#efefef;"></div>
<span class="t" style="left:787px;top:342.4px;width:16px;text-align:center;font-family:'Liberation Serif',serif;font-size:13.5px;color:#000;font-weight:bold;">U</span>
<div style="left:790px;top:355px;width:10px;height:1px;background:#000;"></div>
<div style="left:815px;top:343px;width:16px;height:16px;background:#000;"></div>
<div style="left:840px;top:341px;width:1px;height:20px;background:#c8c8c8;"></div>
<div style="left:845px;top:338px;width:27px;height:25px;background:#cce4f7;border:1px solid #90c8f6;"></div>
<svg style="left:851.3px;top:343.6px" width="16" height="15" viewBox="0 0 16 15"><rect x="0" y="0.85" width="15" height="1.35" fill="#000"/><rect x="0" y="3.60" width="10.5" height="1.35" fill="#000"/><rect x="0" y="6.35" width="15" height="1.35" fill="#000"/><rect x="0" y="9.10" width="15" height="1.35" fill="#000"/><rect x="0" y="11.85" width="10.5" height="1.35" fill="#000"/></svg>
<svg style="left:878.5px;top:343.6px" width="16" height="15" viewBox="0 0 16 15"><rect x="-0.5" y="-1.5" width="16" height="16" fill="#efefef"/><rect x="0.09999999999999964" y="0.85" width="14.5" height="1.35" fill="#000"/><rect x="2.5999999999999996" y="3.60" width="9.5" height="1.35" fill="#000"/><rect x="0.09999999999999964" y="6.35" width="14.5" height="1.35" fill="#000"/><rect x="2.5999999999999996" y="9.10" width="9.5" height="1.35" fill="#000"/><rect x="2.5999999999999996" y="11.85" width="9.5" height="1.35" fill="#000"/></svg>
<svg style="left:906.5px;top:343.6px" width="16" height="15" viewBox="0 0 16 15"><rect x="-0.5" y="-1.5" width="16" height="16" fill="#efefef"/><rect x="0" y="0.85" width="15" height="1.35" fill="#000"/><rect x="4.5" y="3.60" width="10.5" height="1.35" fill="#000"/><rect x="0" y="6.35" width="15" height="1.35" fill="#000"/><rect x="4.5" y="9.10" width="10.5" height="1.35" fill="#000"/><rect x="4.5" y="11.85" width="10.5" height="1.35" fill="#000"/></svg>
<svg style="left:934.6px;top:343.6px" width="16" height="15" viewBox="0 0 16 15"><rect x="-0.5" y="-1.5" width="16" height="16" fill="#efefef"/><rect x="0" y="0.85" width="14.7" height="1.35" fill="#000"/><rect x="0" y="3.60" width="14.7" height="1.35" fill="#000"/><rect x="0" y="6.35" width="14.7" height="1.35" fill="#000"/><rect x="0" y="9.10" width="14.7" height="1.35" fill="#000"/><rect x="0" y="11.85" width="14.7" height="1.35" fill="#000"/></svg>
<span class="t" style="left:959.70px;top:342.20px;font-size:12.5px;color:#000;font-weight:bold;transform:scaleX(1.22);transform-origin:0 50%;">»</span>
<div style="left:968px;top:338px;width:1px;height:27px;background:#a8a8a8;"></div>
<div style="left:592px;top:363px;width:377px;height:1px;background:#cfcfcf;"></div>
<div style="left:592px;top:364px;width:377px;height:214px;background:#fff;border:1px solid #707070;border-top-color:#666;"></div>
<span class="t" style="left:597.00px;top:368.50px;font-size:13px;color:#000;">The following exceptional cases should be processed in the</span>
<span class="t" style="left:597.00px;top:383.50px;font-size:13px;color:#000;">order specified where negative value error codes are returned.</span>
<span class="t" style="left:597.00px;top:413.50px;font-size:13px;color:#000;">The function should be designed so that it never throws an</span>
<span class="t" style="left:597.00px;top:428.50px;font-size:13px;color:#000;">error and always returns a non-negative number to indicate a</span>
<span class="t" style="left:597.00px;top:443.50px;font-size:13px;color:#000;">path or a negative number to indicate some abnormal condition.</span>
<span class="t" style="left:590.00px;top:593.70px;font-size:11px;color:#1a1a1a;letter-spacing:-0.150px;">Keywords:</span>
<div style="left:649px;top:592px;width:323px;height:20px;background:#fff;border:1px solid #7a7a7a;"></div>
<svg style="left:592px;top:628px" width="6" height="9" viewBox="0 0 6 9"><path d="M0.3 0L5.4 4.5L0.3 9Z" fill="#000"/></svg>
<span class="t" style="left:604.50px;top:624.60px;font-size:11px;color:#1a1a1a;letter-spacing:-0.058px;">Revision information:</span>
<div style="left:586px;top:652px;width:391px;height:1px;background:#dadada;"></div>
<div style="left:586px;top:655px;width:391px;height:18px;background:#fff;"></div>
<div style="left:586px;top:675px;width:391px;height:1px;background:#dadada;"></div>
<svg style="left:589.8px;top:659px" width="5.6" height="10" viewBox="0 0 5.6 10"><path d="M0 0L5.6 5L0 10Z" fill="#000"/></svg>
<span class="t" style="left:602.40px;top:656.60px;font-size:12px;color:#000;font-weight:bold;letter-spacing:0.311px;">Custom Attributes</span>
<div style="left:586px;top:682px;width:391px;height:1px;background:#dadada;"></div>
<div style="left:586px;top:685px;width:391px;height:18px;background:#fff;"></div>
<div style="left:586px;top:705px;width:391px;height:1px;background:#dadada;"></div>
<svg style="left:589px;top:691px" width="9.4" height="5.4" viewBox="0 0 9.4 5.4"><path d="M0 0H9.4L4.7 5.4Z" fill="#000"/></svg>
<span class="t" style="left:602.40px;top:686.60px;font-size:12px;color:#000;font-weight:bold;letter-spacing:-0.068px;">Links</span>
<div style="left:588px;top:709px;width:387px;height:68px;background:#fff;"></div>
<span class="t" style="left:596.50px;top:717.50px;font-size:13px;color:#333;letter-spacing:-0.092px;">No links</span>
<div style="left:586px;top:785px;width:391px;height:1px;background:#dadada;"></div>
<div style="left:586px;top:788px;width:391px;height:18px;background:#fff;"></div>
<div style="left:586px;top:808px;width:391px;height:1px;background:#dadada;"></div>
<svg style="left:589.8px;top:792px" width="5.6" height="10" viewBox="0 0 5.6 10"><path d="M0 0L5.6 5L0 10Z" fill="#000"/></svg>
<span class="t" style="left:602.40px;top:789.60px;font-size:12px;color:#000;font-weight:bold;letter-spacing:0.186px;">Comments</span>
<div style="left:0px;top:813px;width:982px;height:22px;background:#efefef;"></div>
<div style="left:976px;top:830px;width:2px;height:2px;background:#a8a8a8;"></div>
<div style="left:973px;top:830px;width:2px;height:2px;background:#a8a8a8;"></div>
<div style="left:970px;top:830px;width:2px;height:2px;background:#a8a8a8;"></div>
<div style="left:976px;top:827px;width:2px;height:2px;background:#a8a8a8;"></div>
<div style="left:973px;top:827px;width:2px;height:2px;background:#a8a8a8;"></div>
<div style="left:976px;top:824px;width:2px;height:2px;background:#a8a8a8;"></div>
<div style="left:0px;top:0px;width:982px;height:1px;background:#6e6e6e;"></div>
<div style="left:0px;top:0px;width:1px;height:835px;background:#6e6e6e;"></div>
<div style="left:981px;top:0px;width:1px;height:835px;background:#6e6e6e;"></div>
<div style="left:0px;top:834px;width:982px;height:1px;background:#6e6e6e;"></div>
</div></body></html>
